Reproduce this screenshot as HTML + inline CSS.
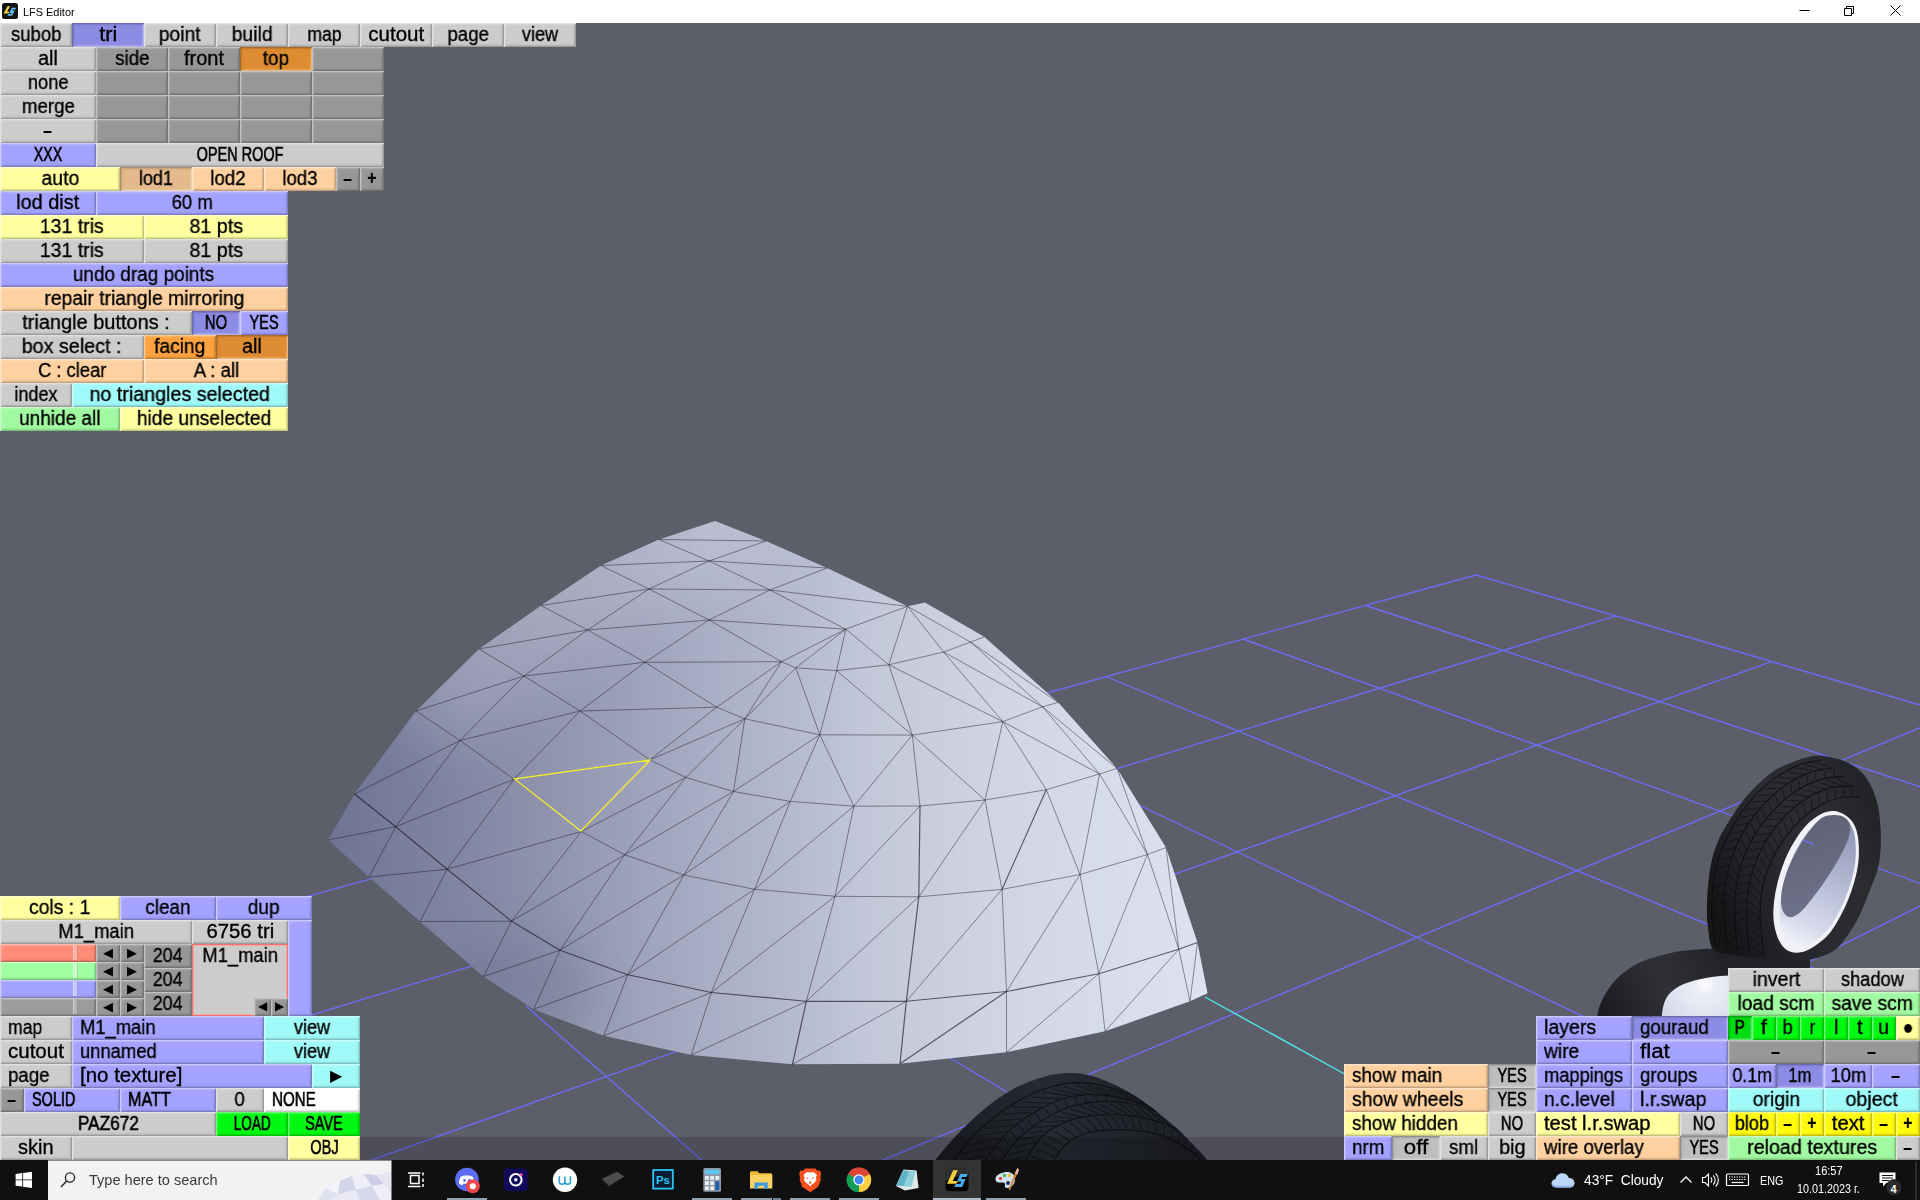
<!DOCTYPE html>
<html><head><meta charset="utf-8"><title>LFS Editor</title>
<style>
html,body{margin:0;padding:0;background:#5c5e6a;}
body{width:1920px;height:1200px;overflow:hidden;font-family:"Liberation Sans",sans-serif;}
#root{position:relative;width:1920px;height:1200px;overflow:hidden;background:#5c5e6a;}
#titlebar{position:absolute;left:0;top:0;width:1920px;height:23px;background:#fff;}
#ticon{position:absolute;left:2px;top:3px;width:16px;height:16px;}
#ttext{position:absolute;left:23px;top:5px;font-size:11.5px;line-height:15px;color:#000;transform:scaleX(0.95);transform-origin:0 50%;}
#wctl{position:absolute;left:1780px;top:0;}
#scene{position:absolute;left:0;top:23px;}
.b{position:absolute;box-sizing:border-box;text-align:center;font-size:20px;line-height:24px;color:#000;white-space:nowrap;overflow:hidden;}
.t{will-change:transform;display:inline-block;transform:scaleX(0.88);-webkit-text-stroke:0.35px #000;position:relative;top:-1px;}
.ar{font-size:13px;line-height:17px;}
.ar .t,.ar2 .t{transform:none;-webkit-text-stroke:0;top:0;}
.ar2{font-size:12px;line-height:17px;}
.pg{font-size:16px;line-height:23px;}
.pg .t{transform:none;-webkit-text-stroke:0;top:0;}
.mbox{line-height:22px;border:1px solid #ff6b6b;box-shadow:inset 0 0 0 1px rgba(255,120,120,.35) !important;}
#taskbar{position:absolute;left:0;top:1160px;width:1920px;height:40px;background:#101010;}
.tb{position:absolute;white-space:nowrap;line-height:18px;transform-origin:0 50%;}

</style></head><body>
<div id="root">
<div id="titlebar"><div id="ticon"><svg width="16" height="16" viewBox="0 0 16 16"><rect x="0" y="0" width="16" height="16" rx="2.500" fill="#131313"/><path d="M5.500 3.200h2.600l-3 5.600h2.400l-.9 1.700h-5z" fill="#f0d24a"/><path d="M9.800 4.800h4.400l-.9 1.700h-2.500l-.5 1.100h2.500l-2.700 5.200h-4.600l.9-1.700h2.700l.6-1.200h-2.500z" fill="#5db6ee"/></svg></div><span id="ttext">LFS Editor</span>
<svg id="wctl" width="140" height="23" viewBox="0 0 140 23"><path d="M19.5 10.5h10M64.5 8.5h7v7h-7zM66.5 8.5v-2h7v7h-2M110.500 5.5l10 10M120.5 5.5l-10 10" fill="none" stroke="#000" stroke-width="1"/></svg>
</div>
<svg id="scene" width="1920" height="1137" viewBox="0 23 1920 1137">
<defs>
<linearGradient id="dg" gradientUnits="userSpaceOnUse" x1="330" y1="0" x2="1208" y2="0"><stop offset="0.000" stop-color="#707494"/><stop offset="0.084" stop-color="#7a7e9c"/><stop offset="0.137" stop-color="#8084a1"/><stop offset="0.308" stop-color="#989cb5"/><stop offset="0.431" stop-color="#a9aec4"/><stop offset="0.513" stop-color="#b4b8cd"/><stop offset="0.633" stop-color="#c5cadb"/><stop offset="0.763" stop-color="#d0d4e4"/><stop offset="0.877" stop-color="#d7dcea"/><stop offset="1.000" stop-color="#dee2f0"/></linearGradient>
<radialGradient id="dtop" gradientUnits="userSpaceOnUse" cx="700" cy="540" r="200"><stop offset="0" stop-color="#c6c9df" stop-opacity="0.6"/><stop offset="1" stop-color="#c6c9df" stop-opacity="0"/></radialGradient>
<radialGradient id="ddark" gradientUnits="userSpaceOnUse" cx="0" cy="0" r="1" gradientTransform="translate(500 975) rotate(40) scale(290 150)"><stop offset="0" stop-color="#707695" stop-opacity="0.6"/><stop offset="0.5" stop-color="#727897" stop-opacity="0.34"/><stop offset="1" stop-color="#747a99" stop-opacity="0"/></radialGradient>
<linearGradient id="ty1" gradientUnits="userSpaceOnUse" x1="1710" y1="900" x2="1880" y2="830"><stop offset="0" stop-color="#151518"/><stop offset="0.25" stop-color="#222327"/><stop offset="0.5" stop-color="#2a2b30"/><stop offset="0.8" stop-color="#2b2c30"/><stop offset="1" stop-color="#232427"/></linearGradient>
<linearGradient id="ty3" gradientUnits="userSpaceOnUse" x1="960" y1="1160" x2="1180" y2="1080"><stop offset="0" stop-color="#1a1c22"/><stop offset="0.45" stop-color="#272a33"/><stop offset="1" stop-color="#1c1e24"/></linearGradient>
<linearGradient id="ty2" gradientUnits="userSpaceOnUse" x1="1600" y1="1000" x2="1720" y2="950"><stop offset="0" stop-color="#1c1d21"/><stop offset="0.5" stop-color="#2f3136"/><stop offset="1" stop-color="#222327"/></linearGradient>
<linearGradient id="rim1" gradientUnits="userSpaceOnUse" x1="1850" y1="820" x2="1790" y2="945"><stop offset="0" stop-color="#8d93b3"/><stop offset="0.45" stop-color="#b4b9d3"/><stop offset="0.8" stop-color="#d6d9eb"/><stop offset="1" stop-color="#f2f3fa"/></linearGradient>
<linearGradient id="hole1" gradientUnits="userSpaceOnUse" x1="1800" y1="820" x2="1830" y2="900"><stop offset="0" stop-color="#5f6273"/><stop offset="1" stop-color="#6d7188"/></linearGradient>
<radialGradient id="rim2g" gradientUnits="userSpaceOnUse" cx="1705" cy="985" r="70"><stop offset="0" stop-color="#ffffff"/><stop offset="0.15" stop-color="#eceef7"/><stop offset="1" stop-color="#c9cce0"/></radialGradient>
<clipPath id="sc"><rect x="0" y="23" width="1920" height="1137"/></clipPath>
</defs>
<rect x="0" y="23" width="1920" height="1137" fill="#5c5e6a"/>
<g clip-path="url(#sc)">
<line x1="300" y1="898.4" x2="1476" y2="575.0" stroke="#6d6df6" stroke-width="1.35" opacity="1"/>
<line x1="0" y1="1110.4" x2="1615" y2="616.2" stroke="#6d6df6" stroke-width="1.35" opacity="1"/>
<line x1="340" y1="1171.3" x2="1771" y2="661.9" stroke="#6d6df6" stroke-width="1.35" opacity="1"/>
<line x1="860" y1="1169.7" x2="1930" y2="723.5" stroke="#6d6df6" stroke-width="1.35" opacity="1"/>
<line x1="1380" y1="1176.0" x2="1930" y2="901.0" stroke="#6d6df6" stroke-width="1.35" opacity="1"/>
<line x1="1476" y1="575" x2="1930" y2="708" stroke="#6d6df6" stroke-width="1.35" opacity="1"/>
<line x1="1367" y1="606" x2="1930" y2="790" stroke="#6d6df6" stroke-width="1.35" opacity="1"/>
<line x1="1243" y1="639" x2="1930" y2="887" stroke="#6d6df6" stroke-width="1.35" opacity="1"/>
<line x1="1107" y1="677" x2="1930" y2="1016" stroke="#6d6df6" stroke-width="1.35" opacity="1"/>
<line x1="1040" y1="758" x2="1700" y2="1072" stroke="#6d6df6" stroke-width="1.35" opacity="1"/>
<line x1="950" y1="1058" x2="1130" y2="1165" stroke="#6d6df6" stroke-width="1.35" opacity="1"/>
<line x1="526" y1="1006" x2="705" y2="1163" stroke="#6d6df6" stroke-width="1.35" opacity="1"/>
<line x1="1205" y1="997" x2="1350" y2="1077" stroke="#50e8e8" stroke-width="1.4" opacity="1"/>
<polygon points="715,521 659,539.5 601,565.5 541,605.5 479,649 416,711 354.5,794 328.2,840 369,877 420,921.5 483.4,976.6 533.6,1009.3 603.7,1035.8 691.3,1055 792.5,1064.3 900,1063.8 1006.5,1052.3 1105,1031.3 1190,1001.3 1207.5,993.3 1197.5,942.5 1166,847.5 1117,768.4 1058.2,702.4 984.2,636.8 925,602.5 907.5,606.3 827,568 766,541" fill="url(#dg)"/>
<clipPath id="dclip"><polygon points="715,521 659,539.5 601,565.5 541,605.5 479,649 416,711 354.5,794 328.2,840 369,877 420,921.5 483.4,976.6 533.6,1009.3 603.7,1035.8 691.3,1055 792.5,1064.3 900,1063.8 1006.5,1052.3 1105,1031.3 1190,1001.3 1207.5,993.3 1197.5,942.5 1166,847.5 1117,768.4 1058.2,702.4 984.2,636.8 925,602.5 907.5,606.3 827,568 766,541"/></clipPath>
<g clip-path="url(#dclip)"><polyline points="760,500 715,521 659,539.5 601,565.5 541,605.5 479,649 416,711" fill="none" stroke="#fff" stroke-width="120" stroke-linejoin="round" opacity="0.2" style="filter:blur(32px)"/><ellipse cx="518" cy="985" rx="75" ry="50" fill="#4a5070" opacity="0.2" style="filter:blur(22px)"/></g>
<line x1="659" y1="539.5" x2="709" y2="561" stroke="#14141e" stroke-width="0.7" opacity="0.64"/>
<line x1="709" y1="561" x2="770" y2="590" stroke="#14141e" stroke-width="0.7" opacity="0.64"/>
<line x1="770" y1="590" x2="845.8" y2="629.2" stroke="#14141e" stroke-width="0.7" opacity="0.64"/>
<line x1="601" y1="565.5" x2="649" y2="589" stroke="#14141e" stroke-width="0.7" opacity="0.64"/>
<line x1="649" y1="589" x2="709" y2="620" stroke="#14141e" stroke-width="0.7" opacity="0.64"/>
<line x1="709" y1="620" x2="781.5" y2="661.7" stroke="#14141e" stroke-width="0.7" opacity="0.64"/>
<line x1="541" y1="605.5" x2="587.5" y2="630" stroke="#14141e" stroke-width="0.7" opacity="0.64"/>
<line x1="587.5" y1="630" x2="645" y2="662.3" stroke="#14141e" stroke-width="0.7" opacity="0.64"/>
<line x1="645" y1="662.3" x2="716.7" y2="707.2" stroke="#14141e" stroke-width="0.7" opacity="0.64"/>
<line x1="479" y1="649" x2="524" y2="676" stroke="#14141e" stroke-width="0.7" opacity="0.64"/>
<line x1="524" y1="676" x2="580" y2="711" stroke="#14141e" stroke-width="0.7" opacity="0.64"/>
<line x1="580" y1="711" x2="649.8" y2="759.9" stroke="#14141e" stroke-width="0.7" opacity="0.64"/>
<line x1="649.8" y1="759.9" x2="685.8" y2="777.5" stroke="#14141e" stroke-width="0.7" opacity="0.64"/>
<line x1="685.8" y1="777.5" x2="733.5" y2="791.5" stroke="#14141e" stroke-width="0.7" opacity="0.64"/>
<line x1="733.5" y1="791.5" x2="790.3" y2="801.4" stroke="#14141e" stroke-width="0.7" opacity="0.64"/>
<line x1="790.3" y1="801.4" x2="853.8" y2="806.2" stroke="#14141e" stroke-width="0.7" opacity="0.64"/>
<line x1="853.8" y1="806.2" x2="920" y2="806" stroke="#14141e" stroke-width="0.7" opacity="0.64"/>
<line x1="920" y1="806" x2="985" y2="800" stroke="#14141e" stroke-width="0.7" opacity="0.64"/>
<line x1="985" y1="800" x2="1046.3" y2="789.7" stroke="#14141e" stroke-width="0.7" opacity="0.64"/>
<line x1="1046.3" y1="789.7" x2="1099.6" y2="774" stroke="#14141e" stroke-width="0.7" opacity="0.64"/>
<line x1="1099.6" y1="774" x2="1117" y2="768.4" stroke="#14141e" stroke-width="0.7" opacity="0.64"/>
<line x1="416" y1="711" x2="460" y2="740.5" stroke="#14141e" stroke-width="0.7" opacity="0.64"/>
<line x1="460" y1="740.5" x2="514" y2="779.2" stroke="#14141e" stroke-width="0.7" opacity="0.64"/>
<line x1="514" y1="779.2" x2="581.3" y2="831.5" stroke="#14141e" stroke-width="0.7" opacity="0.64"/>
<line x1="581.3" y1="831.5" x2="624.8" y2="854.8" stroke="#14141e" stroke-width="0.7" opacity="0.64"/>
<line x1="624.8" y1="854.8" x2="683.8" y2="875" stroke="#14141e" stroke-width="0.7" opacity="0.64"/>
<line x1="683.8" y1="875" x2="754.5" y2="889.3" stroke="#14141e" stroke-width="0.7" opacity="0.64"/>
<line x1="754.5" y1="889.3" x2="835" y2="896.3" stroke="#14141e" stroke-width="0.7" opacity="0.64"/>
<line x1="835" y1="896.3" x2="918.8" y2="896.8" stroke="#14141e" stroke-width="0.7" opacity="0.64"/>
<line x1="918.8" y1="896.8" x2="1002" y2="889.4" stroke="#14141e" stroke-width="0.7" opacity="0.64"/>
<line x1="1002" y1="889.4" x2="1080" y2="874.5" stroke="#14141e" stroke-width="0.7" opacity="0.64"/>
<line x1="1080" y1="874.5" x2="1147.5" y2="854.5" stroke="#14141e" stroke-width="0.7" opacity="0.64"/>
<line x1="1147.5" y1="854.5" x2="1166" y2="847.5" stroke="#14141e" stroke-width="0.7" opacity="0.64"/>
<line x1="354.5" y1="794" x2="395.8" y2="826.7" stroke="#14141e" stroke-width="1.15" opacity="0.64"/>
<line x1="395.8" y1="826.7" x2="447.2" y2="869.2" stroke="#14141e" stroke-width="1.15" opacity="0.64"/>
<line x1="447.2" y1="869.2" x2="511.5" y2="921.2" stroke="#14141e" stroke-width="1.15" opacity="0.64"/>
<line x1="511.5" y1="921.2" x2="560" y2="950.2" stroke="#14141e" stroke-width="1.15" opacity="0.64"/>
<line x1="560" y1="950.2" x2="627.8" y2="974.8" stroke="#14141e" stroke-width="1.15" opacity="0.64"/>
<line x1="627.8" y1="974.8" x2="711.3" y2="992.5" stroke="#14141e" stroke-width="1.15" opacity="0.64"/>
<line x1="711.3" y1="992.5" x2="806.3" y2="1001.3" stroke="#14141e" stroke-width="1.15" opacity="0.64"/>
<line x1="806.3" y1="1001.3" x2="906.3" y2="1001.3" stroke="#14141e" stroke-width="1.15" opacity="0.64"/>
<line x1="906.3" y1="1001.3" x2="1006.5" y2="991.5" stroke="#14141e" stroke-width="1.15" opacity="0.64"/>
<line x1="1006.5" y1="991.5" x2="1098.8" y2="973.8" stroke="#14141e" stroke-width="1.15" opacity="0.64"/>
<line x1="1098.8" y1="973.8" x2="1178.8" y2="949.3" stroke="#14141e" stroke-width="1.15" opacity="0.64"/>
<line x1="1178.8" y1="949.3" x2="1197.5" y2="942.5" stroke="#14141e" stroke-width="1.15" opacity="0.64"/>
<line x1="659" y1="539.5" x2="766" y2="541" stroke="#14141e" stroke-width="0.7" opacity="0.64"/>
<line x1="766" y1="541" x2="709" y2="561" stroke="#14141e" stroke-width="0.7" opacity="0.64"/>
<line x1="709" y1="561" x2="827" y2="568" stroke="#14141e" stroke-width="0.7" opacity="0.64"/>
<line x1="827" y1="568" x2="770" y2="590" stroke="#14141e" stroke-width="0.7" opacity="0.64"/>
<line x1="770" y1="590" x2="907.5" y2="606.3" stroke="#14141e" stroke-width="0.7" opacity="0.64"/>
<line x1="907.5" y1="606.3" x2="845.8" y2="629.2" stroke="#14141e" stroke-width="0.7" opacity="0.64"/>
<line x1="601" y1="565.5" x2="709" y2="561" stroke="#14141e" stroke-width="0.7" opacity="0.64"/>
<line x1="709" y1="561" x2="649" y2="589" stroke="#14141e" stroke-width="0.7" opacity="0.64"/>
<line x1="649" y1="589" x2="770" y2="590" stroke="#14141e" stroke-width="0.7" opacity="0.64"/>
<line x1="770" y1="590" x2="709" y2="620" stroke="#14141e" stroke-width="0.7" opacity="0.64"/>
<line x1="709" y1="620" x2="845.8" y2="629.2" stroke="#14141e" stroke-width="0.7" opacity="0.64"/>
<line x1="845.8" y1="629.2" x2="781.5" y2="661.7" stroke="#14141e" stroke-width="0.7" opacity="0.64"/>
<line x1="541" y1="605.5" x2="649" y2="589" stroke="#14141e" stroke-width="0.7" opacity="0.64"/>
<line x1="649" y1="589" x2="587.5" y2="630" stroke="#14141e" stroke-width="0.7" opacity="0.64"/>
<line x1="587.5" y1="630" x2="709" y2="620" stroke="#14141e" stroke-width="0.7" opacity="0.64"/>
<line x1="709" y1="620" x2="645" y2="662.3" stroke="#14141e" stroke-width="0.7" opacity="0.64"/>
<line x1="645" y1="662.3" x2="781.5" y2="661.7" stroke="#14141e" stroke-width="0.7" opacity="0.64"/>
<line x1="781.5" y1="661.7" x2="716.7" y2="707.2" stroke="#14141e" stroke-width="0.7" opacity="0.64"/>
<line x1="479" y1="649" x2="587.5" y2="630" stroke="#14141e" stroke-width="0.7" opacity="0.64"/>
<line x1="587.5" y1="630" x2="524" y2="676" stroke="#14141e" stroke-width="0.7" opacity="0.64"/>
<line x1="524" y1="676" x2="645" y2="662.3" stroke="#14141e" stroke-width="0.7" opacity="0.64"/>
<line x1="645" y1="662.3" x2="580" y2="711" stroke="#14141e" stroke-width="0.7" opacity="0.64"/>
<line x1="580" y1="711" x2="716.7" y2="707.2" stroke="#14141e" stroke-width="0.7" opacity="0.64"/>
<line x1="716.7" y1="707.2" x2="649.8" y2="759.9" stroke="#14141e" stroke-width="0.7" opacity="0.64"/>
<line x1="416" y1="711" x2="524" y2="676" stroke="#14141e" stroke-width="0.7" opacity="0.64"/>
<line x1="524" y1="676" x2="460" y2="740.5" stroke="#14141e" stroke-width="0.7" opacity="0.64"/>
<line x1="460" y1="740.5" x2="580" y2="711" stroke="#14141e" stroke-width="0.7" opacity="0.64"/>
<line x1="580" y1="711" x2="514" y2="779.2" stroke="#14141e" stroke-width="0.7" opacity="0.64"/>
<line x1="514" y1="779.2" x2="649.8" y2="759.9" stroke="#14141e" stroke-width="0.7" opacity="0.64"/>
<line x1="649.8" y1="759.9" x2="581.3" y2="831.5" stroke="#14141e" stroke-width="0.7" opacity="0.64"/>
<line x1="581.3" y1="831.5" x2="685.8" y2="777.5" stroke="#14141e" stroke-width="0.7" opacity="0.64"/>
<line x1="685.8" y1="777.5" x2="624.8" y2="854.8" stroke="#14141e" stroke-width="0.7" opacity="0.64"/>
<line x1="624.8" y1="854.8" x2="733.5" y2="791.5" stroke="#14141e" stroke-width="0.7" opacity="0.64"/>
<line x1="733.5" y1="791.5" x2="683.8" y2="875" stroke="#14141e" stroke-width="0.7" opacity="0.64"/>
<line x1="683.8" y1="875" x2="790.3" y2="801.4" stroke="#14141e" stroke-width="0.7" opacity="0.64"/>
<line x1="790.3" y1="801.4" x2="754.5" y2="889.3" stroke="#14141e" stroke-width="0.7" opacity="0.64"/>
<line x1="754.5" y1="889.3" x2="853.8" y2="806.2" stroke="#14141e" stroke-width="0.7" opacity="0.64"/>
<line x1="853.8" y1="806.2" x2="835" y2="896.3" stroke="#14141e" stroke-width="0.7" opacity="0.64"/>
<line x1="835" y1="896.3" x2="920" y2="806" stroke="#14141e" stroke-width="0.7" opacity="0.64"/>
<line x1="920" y1="806" x2="918.8" y2="896.8" stroke="#14141e" stroke-width="1.2" opacity="0.64"/>
<line x1="918.8" y1="896.8" x2="985" y2="800" stroke="#14141e" stroke-width="0.7" opacity="0.64"/>
<line x1="985" y1="800" x2="1002" y2="889.4" stroke="#14141e" stroke-width="0.7" opacity="0.64"/>
<line x1="1002" y1="889.4" x2="1046.3" y2="789.7" stroke="#14141e" stroke-width="1.2" opacity="0.64"/>
<line x1="1046.3" y1="789.7" x2="1080" y2="874.5" stroke="#14141e" stroke-width="0.7" opacity="0.64"/>
<line x1="1080" y1="874.5" x2="1099.6" y2="774" stroke="#14141e" stroke-width="0.7" opacity="0.64"/>
<line x1="1099.6" y1="774" x2="1147.5" y2="854.5" stroke="#14141e" stroke-width="0.7" opacity="0.64"/>
<line x1="1147.5" y1="854.5" x2="1117" y2="768.4" stroke="#14141e" stroke-width="0.7" opacity="0.64"/>
<line x1="354.5" y1="794" x2="460" y2="740.5" stroke="#14141e" stroke-width="0.7" opacity="0.64"/>
<line x1="460" y1="740.5" x2="395.8" y2="826.7" stroke="#14141e" stroke-width="0.7" opacity="0.64"/>
<line x1="395.8" y1="826.7" x2="514" y2="779.2" stroke="#14141e" stroke-width="0.7" opacity="0.64"/>
<line x1="514" y1="779.2" x2="447.2" y2="869.2" stroke="#14141e" stroke-width="0.7" opacity="0.64"/>
<line x1="447.2" y1="869.2" x2="581.3" y2="831.5" stroke="#14141e" stroke-width="0.7" opacity="0.64"/>
<line x1="581.3" y1="831.5" x2="511.5" y2="921.2" stroke="#14141e" stroke-width="0.7" opacity="0.64"/>
<line x1="511.5" y1="921.2" x2="624.8" y2="854.8" stroke="#14141e" stroke-width="0.7" opacity="0.64"/>
<line x1="624.8" y1="854.8" x2="560" y2="950.2" stroke="#14141e" stroke-width="0.7" opacity="0.64"/>
<line x1="560" y1="950.2" x2="683.8" y2="875" stroke="#14141e" stroke-width="0.7" opacity="0.64"/>
<line x1="683.8" y1="875" x2="627.8" y2="974.8" stroke="#14141e" stroke-width="0.7" opacity="0.64"/>
<line x1="627.8" y1="974.8" x2="754.5" y2="889.3" stroke="#14141e" stroke-width="0.7" opacity="0.64"/>
<line x1="754.5" y1="889.3" x2="711.3" y2="992.5" stroke="#14141e" stroke-width="0.7" opacity="0.64"/>
<line x1="711.3" y1="992.5" x2="835" y2="896.3" stroke="#14141e" stroke-width="0.7" opacity="0.64"/>
<line x1="835" y1="896.3" x2="806.3" y2="1001.3" stroke="#14141e" stroke-width="0.7" opacity="0.64"/>
<line x1="806.3" y1="1001.3" x2="918.8" y2="896.8" stroke="#14141e" stroke-width="0.7" opacity="0.64"/>
<line x1="918.8" y1="896.8" x2="906.3" y2="1001.3" stroke="#14141e" stroke-width="1.2" opacity="0.64"/>
<line x1="906.3" y1="1001.3" x2="1002" y2="889.4" stroke="#14141e" stroke-width="0.7" opacity="0.64"/>
<line x1="1002" y1="889.4" x2="1006.5" y2="991.5" stroke="#14141e" stroke-width="0.7" opacity="0.64"/>
<line x1="1006.5" y1="991.5" x2="1080" y2="874.5" stroke="#14141e" stroke-width="0.7" opacity="0.64"/>
<line x1="1080" y1="874.5" x2="1098.8" y2="973.8" stroke="#14141e" stroke-width="0.7" opacity="0.64"/>
<line x1="1098.8" y1="973.8" x2="1147.5" y2="854.5" stroke="#14141e" stroke-width="0.7" opacity="0.64"/>
<line x1="1147.5" y1="854.5" x2="1178.8" y2="949.3" stroke="#14141e" stroke-width="0.7" opacity="0.64"/>
<line x1="1178.8" y1="949.3" x2="1166" y2="847.5" stroke="#14141e" stroke-width="0.7" opacity="0.64"/>
<line x1="328.2" y1="840" x2="395.8" y2="826.7" stroke="#14141e" stroke-width="0.7" opacity="0.64"/>
<line x1="395.8" y1="826.7" x2="369" y2="877" stroke="#14141e" stroke-width="0.7" opacity="0.64"/>
<line x1="369" y1="877" x2="447.2" y2="869.2" stroke="#14141e" stroke-width="0.7" opacity="0.64"/>
<line x1="447.2" y1="869.2" x2="420" y2="921.5" stroke="#14141e" stroke-width="0.7" opacity="0.64"/>
<line x1="420" y1="921.5" x2="511.5" y2="921.2" stroke="#14141e" stroke-width="0.7" opacity="0.64"/>
<line x1="511.5" y1="921.2" x2="483.4" y2="976.6" stroke="#14141e" stroke-width="0.7" opacity="0.64"/>
<line x1="483.4" y1="976.6" x2="560" y2="950.2" stroke="#14141e" stroke-width="0.7" opacity="0.64"/>
<line x1="560" y1="950.2" x2="533.6" y2="1009.3" stroke="#14141e" stroke-width="0.7" opacity="0.64"/>
<line x1="533.6" y1="1009.3" x2="627.8" y2="974.8" stroke="#14141e" stroke-width="0.7" opacity="0.64"/>
<line x1="627.8" y1="974.8" x2="603.7" y2="1035.8" stroke="#14141e" stroke-width="0.7" opacity="0.64"/>
<line x1="603.7" y1="1035.8" x2="711.3" y2="992.5" stroke="#14141e" stroke-width="0.7" opacity="0.64"/>
<line x1="711.3" y1="992.5" x2="691.3" y2="1055" stroke="#14141e" stroke-width="0.7" opacity="0.64"/>
<line x1="691.3" y1="1055" x2="806.3" y2="1001.3" stroke="#14141e" stroke-width="0.7" opacity="0.64"/>
<line x1="806.3" y1="1001.3" x2="792.5" y2="1064.3" stroke="#14141e" stroke-width="1.2" opacity="0.64"/>
<line x1="792.5" y1="1064.3" x2="906.3" y2="1001.3" stroke="#14141e" stroke-width="0.7" opacity="0.64"/>
<line x1="906.3" y1="1001.3" x2="900" y2="1063.8" stroke="#14141e" stroke-width="1.2" opacity="0.64"/>
<line x1="900" y1="1063.8" x2="1006.5" y2="991.5" stroke="#14141e" stroke-width="1.2" opacity="0.64"/>
<line x1="1006.5" y1="991.5" x2="1006.5" y2="1052.3" stroke="#14141e" stroke-width="0.7" opacity="0.64"/>
<line x1="1006.5" y1="1052.3" x2="1098.8" y2="973.8" stroke="#14141e" stroke-width="0.7" opacity="0.64"/>
<line x1="1098.8" y1="973.8" x2="1105" y2="1031.3" stroke="#14141e" stroke-width="0.7" opacity="0.64"/>
<line x1="1105" y1="1031.3" x2="1178.8" y2="949.3" stroke="#14141e" stroke-width="0.7" opacity="0.64"/>
<line x1="1178.8" y1="949.3" x2="1190" y2="1001.3" stroke="#14141e" stroke-width="0.7" opacity="0.64"/>
<line x1="1190" y1="1001.3" x2="1197.5" y2="942.5" stroke="#14141e" stroke-width="0.7" opacity="0.64"/>
<line x1="907.5" y1="606.3" x2="888.8" y2="664.8" stroke="#14141e" stroke-width="0.7" opacity="0.64"/>
<line x1="907.5" y1="606.3" x2="943.6" y2="652" stroke="#14141e" stroke-width="0.7" opacity="0.64"/>
<line x1="907.5" y1="606.3" x2="970.6" y2="642.1" stroke="#14141e" stroke-width="0.7" opacity="0.64"/>
<line x1="845.8" y1="629.2" x2="795.8" y2="667.8" stroke="#14141e" stroke-width="0.7" opacity="0.64"/>
<line x1="845.8" y1="629.2" x2="836.6" y2="670.6" stroke="#14141e" stroke-width="0.7" opacity="0.64"/>
<line x1="845.8" y1="629.2" x2="888.8" y2="664.8" stroke="#14141e" stroke-width="0.7" opacity="0.64"/>
<line x1="781.5" y1="661.7" x2="795.8" y2="667.8" stroke="#14141e" stroke-width="0.7" opacity="0.64"/>
<line x1="795.8" y1="667.8" x2="836.6" y2="670.6" stroke="#14141e" stroke-width="0.7" opacity="0.64"/>
<line x1="836.6" y1="670.6" x2="888.8" y2="664.8" stroke="#14141e" stroke-width="0.7" opacity="0.64"/>
<line x1="888.8" y1="664.8" x2="943.6" y2="652" stroke="#14141e" stroke-width="0.7" opacity="0.64"/>
<line x1="943.6" y1="652" x2="970.6" y2="642.1" stroke="#14141e" stroke-width="0.7" opacity="0.64"/>
<line x1="970.6" y1="642.1" x2="984.2" y2="636.8" stroke="#14141e" stroke-width="0.7" opacity="0.64"/>
<line x1="716.7" y1="707.2" x2="744.8" y2="718.8" stroke="#14141e" stroke-width="0.7" opacity="0.64"/>
<line x1="744.8" y1="718.8" x2="819.8" y2="734.8" stroke="#14141e" stroke-width="0.7" opacity="0.64"/>
<line x1="819.8" y1="734.8" x2="912.3" y2="735.1" stroke="#14141e" stroke-width="0.7" opacity="0.64"/>
<line x1="912.3" y1="735.1" x2="1002.8" y2="721.6" stroke="#14141e" stroke-width="0.7" opacity="0.64"/>
<line x1="1002.8" y1="721.6" x2="1042.5" y2="706.8" stroke="#14141e" stroke-width="0.7" opacity="0.64"/>
<line x1="1042.5" y1="706.8" x2="1058.2" y2="702.4" stroke="#14141e" stroke-width="0.7" opacity="0.64"/>
<line x1="781.5" y1="661.7" x2="744.8" y2="718.8" stroke="#14141e" stroke-width="0.7" opacity="0.64"/>
<line x1="795.8" y1="667.8" x2="744.8" y2="718.8" stroke="#14141e" stroke-width="0.7" opacity="0.64"/>
<line x1="795.8" y1="667.8" x2="819.8" y2="734.8" stroke="#14141e" stroke-width="0.7" opacity="0.64"/>
<line x1="836.6" y1="670.6" x2="819.8" y2="734.8" stroke="#14141e" stroke-width="0.7" opacity="0.64"/>
<line x1="836.6" y1="670.6" x2="912.3" y2="735.1" stroke="#14141e" stroke-width="0.7" opacity="0.64"/>
<line x1="888.8" y1="664.8" x2="912.3" y2="735.1" stroke="#14141e" stroke-width="0.7" opacity="0.64"/>
<line x1="888.8" y1="664.8" x2="1002.8" y2="721.6" stroke="#14141e" stroke-width="0.7" opacity="0.64"/>
<line x1="943.6" y1="652" x2="1002.8" y2="721.6" stroke="#14141e" stroke-width="0.7" opacity="0.64"/>
<line x1="943.6" y1="652" x2="1042.5" y2="706.8" stroke="#14141e" stroke-width="0.7" opacity="0.64"/>
<line x1="970.6" y1="642.1" x2="1042.5" y2="706.8" stroke="#14141e" stroke-width="0.7" opacity="0.64"/>
<line x1="970.6" y1="642.1" x2="1058.2" y2="702.4" stroke="#14141e" stroke-width="0.7" opacity="0.64"/>
<line x1="744.8" y1="718.8" x2="649.8" y2="759.9" stroke="#14141e" stroke-width="0.7" opacity="0.64"/>
<line x1="744.8" y1="718.8" x2="685.8" y2="777.5" stroke="#14141e" stroke-width="0.7" opacity="0.64"/>
<line x1="744.8" y1="718.8" x2="733.5" y2="791.5" stroke="#14141e" stroke-width="0.7" opacity="0.64"/>
<line x1="819.8" y1="734.8" x2="733.5" y2="791.5" stroke="#14141e" stroke-width="0.7" opacity="0.64"/>
<line x1="819.8" y1="734.8" x2="790.3" y2="801.4" stroke="#14141e" stroke-width="0.7" opacity="0.64"/>
<line x1="819.8" y1="734.8" x2="853.8" y2="806.2" stroke="#14141e" stroke-width="0.7" opacity="0.64"/>
<line x1="912.3" y1="735.1" x2="853.8" y2="806.2" stroke="#14141e" stroke-width="0.7" opacity="0.64"/>
<line x1="912.3" y1="735.1" x2="920" y2="806" stroke="#14141e" stroke-width="0.7" opacity="0.64"/>
<line x1="912.3" y1="735.1" x2="985" y2="800" stroke="#14141e" stroke-width="0.7" opacity="0.64"/>
<line x1="1002.8" y1="721.6" x2="985" y2="800" stroke="#14141e" stroke-width="0.7" opacity="0.64"/>
<line x1="1002.8" y1="721.6" x2="1046.3" y2="789.7" stroke="#14141e" stroke-width="0.7" opacity="0.64"/>
<line x1="1002.8" y1="721.6" x2="1099.6" y2="774" stroke="#14141e" stroke-width="0.7" opacity="0.64"/>
<line x1="1042.5" y1="706.8" x2="1099.6" y2="774" stroke="#14141e" stroke-width="0.7" opacity="0.64"/>
<line x1="1042.5" y1="706.8" x2="1117" y2="768.4" stroke="#14141e" stroke-width="0.7" opacity="0.64"/>
<polygon points="514.5,779 650,760 581,831" fill="none" stroke="#f2ee3c" stroke-width="1.4"/>
<clipPath id="c3"><path d="M926.6 1174.0 C928.1 1171.6 930.1 1166.6 935.4 1159.8 C940.7 1153.0 950.1 1141.8 958.4 1133.2 C966.7 1124.6 975.9 1115.8 985.0 1108.4 C994.1 1101.0 1003.8 1094.2 1013.3 1089.0 C1022.8 1083.8 1032.8 1080.1 1041.7 1077.4 C1050.6 1074.7 1058.2 1073.3 1066.5 1073.0 C1074.8 1072.7 1082.1 1073.2 1091.3 1075.7 C1100.5 1078.2 1112.0 1083.2 1121.4 1088.1 C1130.8 1093.0 1138.8 1098.3 1147.9 1104.9 C1157.1 1111.5 1168.0 1120.5 1176.3 1127.9 C1184.6 1135.3 1192.3 1143.9 1197.5 1149.2 C1202.7 1154.5 1204.0 1155.7 1207.2 1159.8 C1210.5 1163.9 1215.4 1171.6 1217.0 1174.0 Z"/></clipPath>
<path d="M926.6 1174.0 C928.1 1171.6 930.1 1166.6 935.4 1159.8 C940.7 1153.0 950.1 1141.8 958.4 1133.2 C966.7 1124.6 975.9 1115.8 985.0 1108.4 C994.1 1101.0 1003.8 1094.2 1013.3 1089.0 C1022.8 1083.8 1032.8 1080.1 1041.7 1077.4 C1050.6 1074.7 1058.2 1073.3 1066.5 1073.0 C1074.8 1072.7 1082.1 1073.2 1091.3 1075.7 C1100.5 1078.2 1112.0 1083.2 1121.4 1088.1 C1130.8 1093.0 1138.8 1098.3 1147.9 1104.9 C1157.1 1111.5 1168.0 1120.5 1176.3 1127.9 C1184.6 1135.3 1192.3 1143.9 1197.5 1149.2 C1202.7 1154.5 1204.0 1155.7 1207.2 1159.8 C1210.5 1163.9 1215.4 1171.6 1217.0 1174.0 Z" fill="url(#ty3)"/>
<g clip-path="url(#c3)"><path d="M951.4 1163.3 C955.2 1158.6 965.2 1144.2 974.4 1135.0 C983.5 1125.8 995.1 1115.9 1006.3 1108.4 C1017.5 1100.9 1029.9 1094.1 1041.7 1089.8 C1053.5 1085.5 1065.3 1083.1 1077.1 1082.8 C1088.9 1082.5 1100.7 1084.7 1112.5 1088.1 C1124.3 1091.5 1137.3 1097.0 1147.9 1103.1 C1158.5 1109.1 1171.6 1120.9 1176.3 1124.4" fill="none" stroke="#0e0f12" stroke-width="1.4" opacity="0.8"/>
<path d="M983.2 1163.3 C987.1 1158.3 997.1 1142.0 1006.3 1133.2 C1015.4 1124.4 1027.5 1116.2 1038.1 1110.2 C1048.7 1104.2 1059.1 1099.4 1070.0 1096.9 C1080.9 1094.4 1092.1 1094.2 1103.6 1095.2 C1115.1 1096.2 1128.8 1099.7 1139.1 1103.1 C1149.4 1106.5 1157.0 1110.2 1165.6 1115.5 C1174.1 1120.8 1186.3 1131.8 1190.4 1135.0" fill="none" stroke="#0e0f12" stroke-width="1.4" opacity="0.8"/>
<path d="M999.2 1163.3 C1002.7 1158.9 1011.9 1144.8 1020.4 1136.8 C1029.0 1128.8 1041.0 1120.8 1050.5 1115.5 C1060.0 1110.2 1066.8 1107.2 1077.1 1104.9 C1087.4 1102.6 1100.7 1100.8 1112.5 1101.4 C1124.3 1102.0 1137.3 1105.2 1147.9 1108.4 C1158.5 1111.6 1168.0 1115.8 1176.3 1120.8 C1184.6 1125.8 1194.0 1135.5 1197.5 1138.5" fill="none" stroke="#0e0f12" stroke-width="1.4" opacity="0.8"/>
<path d="M1024.0 1163.3 C1027.0 1158.9 1034.3 1143.9 1041.7 1136.8 C1049.1 1129.7 1059.4 1124.3 1068.2 1120.8 C1077.0 1117.2 1084.5 1116.4 1094.8 1115.5 C1105.1 1114.6 1118.4 1114.0 1130.2 1115.5 C1142.0 1117.0 1156.1 1120.9 1165.6 1124.4 C1175.0 1128.0 1181.0 1132.7 1186.9 1136.8 C1192.8 1140.9 1198.7 1147.1 1201.0 1149.2" fill="none" stroke="#0e0f12" stroke-width="1.4" opacity="0.8"/>
<path d="M1052.3 1163.3 C1054.4 1160.3 1059.1 1150.6 1064.7 1145.6 C1070.3 1140.6 1077.9 1135.8 1085.9 1133.2 C1093.9 1130.6 1102.8 1130.0 1112.5 1129.7 C1122.2 1129.4 1135.0 1130.0 1144.4 1131.5 C1153.9 1133.0 1161.5 1135.3 1169.2 1138.5 C1176.9 1141.7 1185.1 1147.4 1190.4 1150.9 C1195.7 1154.5 1199.2 1158.3 1201.0 1159.8" fill="none" stroke="#0e0f12" stroke-width="1.4" opacity="0.8"/>
<line x1="955.2" y1="1162.5" x2="985.8" y2="1155.8" stroke="#0e0f12" stroke-width="1.12" opacity="0.64"/>
<line x1="962.4" y1="1153.6" x2="992.3" y2="1147.4" stroke="#0e0f12" stroke-width="1.12" opacity="0.64"/>
<line x1="969.5" y1="1144.8" x2="998.8" y2="1138.9" stroke="#0e0f12" stroke-width="1.12" opacity="0.64"/>
<line x1="976.8" y1="1136.0" x2="1006.1" y2="1131.3" stroke="#0e0f12" stroke-width="1.12" opacity="0.64"/>
<line x1="985.3" y1="1128.5" x2="1014.6" y2="1125.0" stroke="#0e0f12" stroke-width="1.12" opacity="0.64"/>
<line x1="994.1" y1="1121.3" x2="1023.2" y2="1118.7" stroke="#0e0f12" stroke-width="1.12" opacity="0.64"/>
<line x1="1002.9" y1="1114.1" x2="1031.8" y2="1112.4" stroke="#0e0f12" stroke-width="1.12" opacity="0.64"/>
<line x1="1012.0" y1="1107.3" x2="1041.1" y2="1107.4" stroke="#0e0f12" stroke-width="1.12" opacity="0.64"/>
<line x1="1022.1" y1="1102.1" x2="1050.9" y2="1103.2" stroke="#0e0f12" stroke-width="1.12" opacity="0.64"/>
<line x1="1032.2" y1="1096.9" x2="1060.6" y2="1099.1" stroke="#0e0f12" stroke-width="1.12" opacity="0.64"/>
<line x1="1042.3" y1="1091.9" x2="1070.7" y2="1096.1" stroke="#0e0f12" stroke-width="1.12" opacity="0.64"/>
<line x1="1053.2" y1="1089.0" x2="1081.3" y2="1095.4" stroke="#0e0f12" stroke-width="1.12" opacity="0.64"/>
<line x1="1064.4" y1="1087.0" x2="1091.9" y2="1094.7" stroke="#0e0f12" stroke-width="1.12" opacity="0.64"/>
<line x1="1075.6" y1="1085.0" x2="1102.4" y2="1094.5" stroke="#0e0f12" stroke-width="1.12" opacity="0.64"/>
<line x1="1086.8" y1="1085.2" x2="1112.8" y2="1096.6" stroke="#0e0f12" stroke-width="1.12" opacity="0.64"/>
<line x1="1098.0" y1="1086.9" x2="1123.2" y2="1098.8" stroke="#0e0f12" stroke-width="1.12" opacity="0.64"/>
<line x1="1109.3" y1="1088.7" x2="1133.6" y2="1101.0" stroke="#0e0f12" stroke-width="1.12" opacity="0.64"/>
<line x1="1120.1" y1="1091.7" x2="1143.5" y2="1104.9" stroke="#0e0f12" stroke-width="1.12" opacity="0.64"/>
<line x1="1130.6" y1="1096.2" x2="1153.1" y2="1109.3" stroke="#0e0f12" stroke-width="1.12" opacity="0.64"/>
<line x1="1141.1" y1="1100.7" x2="1162.8" y2="1113.8" stroke="#0e0f12" stroke-width="1.12" opacity="0.64"/>
<line x1="1151.3" y1="1105.6" x2="1171.3" y2="1120.1" stroke="#0e0f12" stroke-width="1.12" opacity="0.64"/>
<line x1="1160.4" y1="1112.4" x2="1179.7" y2="1126.7" stroke="#0e0f12" stroke-width="1.12" opacity="0.64"/>
<line x1="1169.5" y1="1119.3" x2="1188.1" y2="1133.3" stroke="#0e0f12" stroke-width="1.12" opacity="0.64"/>
<line x1="990.6" y1="1155.8" x2="998.2" y2="1162.5" stroke="#0e0f12" stroke-width="1.12" opacity="0.64"/>
<line x1="997.0" y1="1147.5" x2="1004.5" y2="1154.6" stroke="#0e0f12" stroke-width="1.12" opacity="0.64"/>
<line x1="1003.4" y1="1139.2" x2="1010.8" y2="1146.8" stroke="#0e0f12" stroke-width="1.12" opacity="0.64"/>
<line x1="1010.6" y1="1131.6" x2="1017.1" y2="1139.0" stroke="#0e0f12" stroke-width="1.12" opacity="0.64"/>
<line x1="1019.0" y1="1125.4" x2="1024.6" y2="1132.4" stroke="#0e0f12" stroke-width="1.12" opacity="0.64"/>
<line x1="1027.5" y1="1119.3" x2="1032.8" y2="1126.6" stroke="#0e0f12" stroke-width="1.12" opacity="0.64"/>
<line x1="1036.0" y1="1113.1" x2="1041.0" y2="1120.8" stroke="#0e0f12" stroke-width="1.12" opacity="0.64"/>
<line x1="1045.2" y1="1108.3" x2="1049.3" y2="1115.2" stroke="#0e0f12" stroke-width="1.12" opacity="0.64"/>
<line x1="1054.9" y1="1104.3" x2="1058.5" y2="1111.3" stroke="#0e0f12" stroke-width="1.12" opacity="0.64"/>
<line x1="1064.6" y1="1100.2" x2="1067.8" y2="1107.5" stroke="#0e0f12" stroke-width="1.12" opacity="0.64"/>
<line x1="1074.6" y1="1097.5" x2="1077.2" y2="1104.0" stroke="#0e0f12" stroke-width="1.12" opacity="0.64"/>
<line x1="1085.1" y1="1096.9" x2="1087.2" y2="1103.1" stroke="#0e0f12" stroke-width="1.12" opacity="0.64"/>
<line x1="1095.5" y1="1096.3" x2="1097.2" y2="1102.2" stroke="#0e0f12" stroke-width="1.12" opacity="0.64"/>
<line x1="1106.0" y1="1096.3" x2="1107.2" y2="1101.3" stroke="#0e0f12" stroke-width="1.12" opacity="0.64"/>
<line x1="1116.2" y1="1098.4" x2="1117.1" y2="1101.9" stroke="#0e0f12" stroke-width="1.12" opacity="0.64"/>
<line x1="1126.5" y1="1100.7" x2="1127.0" y2="1103.9" stroke="#0e0f12" stroke-width="1.12" opacity="0.64"/>
<line x1="1136.7" y1="1102.9" x2="1136.8" y2="1105.8" stroke="#0e0f12" stroke-width="1.12" opacity="0.64"/>
<line x1="1146.4" y1="1106.7" x2="1146.6" y2="1108.0" stroke="#0e0f12" stroke-width="1.12" opacity="0.64"/>
<line x1="1156.0" y1="1111.1" x2="1155.9" y2="1111.8" stroke="#0e0f12" stroke-width="1.12" opacity="0.64"/>
<line x1="1165.5" y1="1115.5" x2="1165.1" y2="1115.8" stroke="#0e0f12" stroke-width="1.12" opacity="0.64"/>
<line x1="1173.9" y1="1121.8" x2="1174.1" y2="1120.1" stroke="#0e0f12" stroke-width="1.12" opacity="0.64"/>
<line x1="1182.1" y1="1128.2" x2="1182.2" y2="1126.0" stroke="#0e0f12" stroke-width="1.12" opacity="0.64"/>
<line x1="1190.3" y1="1134.7" x2="1189.9" y2="1132.4" stroke="#0e0f12" stroke-width="1.12" opacity="0.64"/>
<line x1="1002.2" y1="1162.6" x2="1026.0" y2="1156.6" stroke="#0e0f12" stroke-width="1.12" opacity="0.64"/>
<line x1="1008.3" y1="1154.8" x2="1031.1" y2="1149.2" stroke="#0e0f12" stroke-width="1.12" opacity="0.64"/>
<line x1="1014.4" y1="1147.0" x2="1036.2" y2="1141.7" stroke="#0e0f12" stroke-width="1.12" opacity="0.64"/>
<line x1="1020.6" y1="1139.4" x2="1042.3" y2="1135.3" stroke="#0e0f12" stroke-width="1.12" opacity="0.64"/>
<line x1="1028.0" y1="1133.0" x2="1049.9" y2="1130.5" stroke="#0e0f12" stroke-width="1.12" opacity="0.64"/>
<line x1="1036.1" y1="1127.4" x2="1057.6" y2="1125.8" stroke="#0e0f12" stroke-width="1.12" opacity="0.64"/>
<line x1="1044.2" y1="1121.7" x2="1065.3" y2="1121.1" stroke="#0e0f12" stroke-width="1.12" opacity="0.64"/>
<line x1="1052.5" y1="1116.3" x2="1073.9" y2="1118.8" stroke="#0e0f12" stroke-width="1.12" opacity="0.64"/>
<line x1="1061.6" y1="1112.7" x2="1082.7" y2="1116.9" stroke="#0e0f12" stroke-width="1.12" opacity="0.64"/>
<line x1="1070.8" y1="1109.2" x2="1091.5" y2="1114.9" stroke="#0e0f12" stroke-width="1.12" opacity="0.64"/>
<line x1="1080.1" y1="1105.9" x2="1100.5" y2="1114.4" stroke="#0e0f12" stroke-width="1.12" opacity="0.64"/>
<line x1="1089.9" y1="1105.0" x2="1109.5" y2="1114.3" stroke="#0e0f12" stroke-width="1.12" opacity="0.64"/>
<line x1="1099.8" y1="1104.2" x2="1118.5" y2="1114.2" stroke="#0e0f12" stroke-width="1.12" opacity="0.64"/>
<line x1="1109.6" y1="1103.3" x2="1127.6" y2="1114.1" stroke="#0e0f12" stroke-width="1.12" opacity="0.64"/>
<line x1="1119.3" y1="1103.9" x2="1136.3" y2="1116.1" stroke="#0e0f12" stroke-width="1.12" opacity="0.64"/>
<line x1="1129.0" y1="1105.8" x2="1145.1" y2="1118.2" stroke="#0e0f12" stroke-width="1.12" opacity="0.64"/>
<line x1="1138.7" y1="1107.8" x2="1153.9" y2="1120.4" stroke="#0e0f12" stroke-width="1.12" opacity="0.64"/>
<line x1="1148.4" y1="1109.7" x2="1162.7" y2="1122.5" stroke="#0e0f12" stroke-width="1.12" opacity="0.64"/>
<line x1="1157.5" y1="1113.5" x2="1170.6" y2="1126.6" stroke="#0e0f12" stroke-width="1.12" opacity="0.64"/>
<line x1="1166.5" y1="1117.6" x2="1178.5" y2="1131.1" stroke="#0e0f12" stroke-width="1.12" opacity="0.64"/>
<line x1="1175.5" y1="1121.6" x2="1186.3" y2="1135.7" stroke="#0e0f12" stroke-width="1.12" opacity="0.64"/>
<line x1="1183.4" y1="1127.5" x2="1193.1" y2="1141.5" stroke="#0e0f12" stroke-width="1.12" opacity="0.64"/>
<line x1="1191.0" y1="1133.8" x2="1199.9" y2="1147.5" stroke="#0e0f12" stroke-width="1.12" opacity="0.64"/>
<line x1="1031.3" y1="1156.6" x2="1050.0" y2="1162.6" stroke="#0e0f12" stroke-width="1.12" opacity="0.64"/>
<line x1="1036.2" y1="1149.3" x2="1054.3" y2="1156.4" stroke="#0e0f12" stroke-width="1.12" opacity="0.64"/>
<line x1="1041.1" y1="1142.1" x2="1058.6" y2="1150.2" stroke="#0e0f12" stroke-width="1.12" opacity="0.64"/>
<line x1="1047.0" y1="1135.9" x2="1063.1" y2="1144.3" stroke="#0e0f12" stroke-width="1.12" opacity="0.64"/>
<line x1="1054.5" y1="1131.4" x2="1069.6" y2="1140.5" stroke="#0e0f12" stroke-width="1.12" opacity="0.64"/>
<line x1="1062.0" y1="1126.8" x2="1076.0" y2="1136.7" stroke="#0e0f12" stroke-width="1.12" opacity="0.64"/>
<line x1="1069.5" y1="1122.3" x2="1082.5" y2="1132.9" stroke="#0e0f12" stroke-width="1.12" opacity="0.64"/>
<line x1="1078.1" y1="1120.5" x2="1089.7" y2="1131.2" stroke="#0e0f12" stroke-width="1.12" opacity="0.64"/>
<line x1="1086.7" y1="1118.8" x2="1097.1" y2="1130.1" stroke="#0e0f12" stroke-width="1.12" opacity="0.64"/>
<line x1="1095.3" y1="1117.1" x2="1104.6" y2="1129.1" stroke="#0e0f12" stroke-width="1.12" opacity="0.64"/>
<line x1="1104.0" y1="1116.9" x2="1112.0" y2="1128.3" stroke="#0e0f12" stroke-width="1.12" opacity="0.64"/>
<line x1="1112.8" y1="1117.0" x2="1119.5" y2="1128.7" stroke="#0e0f12" stroke-width="1.12" opacity="0.64"/>
<line x1="1121.6" y1="1117.0" x2="1127.0" y2="1129.1" stroke="#0e0f12" stroke-width="1.12" opacity="0.64"/>
<line x1="1130.3" y1="1117.0" x2="1134.5" y2="1129.4" stroke="#0e0f12" stroke-width="1.12" opacity="0.64"/>
<line x1="1138.9" y1="1119.0" x2="1142.0" y2="1130.0" stroke="#0e0f12" stroke-width="1.12" opacity="0.64"/>
<line x1="1147.4" y1="1121.1" x2="1149.3" y2="1131.6" stroke="#0e0f12" stroke-width="1.12" opacity="0.64"/>
<line x1="1155.9" y1="1123.2" x2="1156.5" y2="1133.6" stroke="#0e0f12" stroke-width="1.12" opacity="0.64"/>
<line x1="1164.4" y1="1125.4" x2="1163.8" y2="1135.7" stroke="#0e0f12" stroke-width="1.12" opacity="0.64"/>
<line x1="1172.1" y1="1129.4" x2="1170.8" y2="1138.2" stroke="#0e0f12" stroke-width="1.12" opacity="0.64"/>
<line x1="1179.7" y1="1133.8" x2="1177.3" y2="1142.0" stroke="#0e0f12" stroke-width="1.12" opacity="0.64"/>
<line x1="1187.2" y1="1138.3" x2="1183.7" y2="1145.8" stroke="#0e0f12" stroke-width="1.12" opacity="0.64"/>
<line x1="1193.8" y1="1144.0" x2="1190.1" y2="1149.7" stroke="#0e0f12" stroke-width="1.12" opacity="0.64"/>
<line x1="1200.4" y1="1149.8" x2="1195.9" y2="1154.5" stroke="#0e0f12" stroke-width="1.12" opacity="0.64"/></g>
<path d="M1594.5 1034.8 C1594.9 1032.0 1595.7 1023.5 1596.9 1017.9 C1598.1 1012.3 1598.5 1007.5 1601.7 1001.0 C1604.9 994.5 1609.8 985.7 1616.2 979.2 C1622.7 972.8 1631.1 966.7 1640.4 962.3 C1649.7 957.9 1662.9 954.8 1671.8 952.7 C1680.7 950.6 1686.8 950.4 1693.6 949.8 C1700.4 949.2 1706.9 948.1 1712.9 949.0 C1718.9 949.9 1727.0 954.1 1729.8 955.1 L1810 960 L1810 1040 L1590 1040 Z" fill="url(#ty2)"/>
<path d="M1662.2 1034.8 C1662.1 1032.4 1661.5 1025.1 1661.7 1020.3 C1661.9 1015.5 1662.1 1010.2 1663.4 1005.8 C1664.7 1001.4 1666.0 997.3 1669.4 993.7 C1672.8 990.1 1677.9 986.7 1683.9 984.1 C1690.0 981.5 1698.1 979.4 1705.7 978.0 C1713.3 976.6 1722.5 975.8 1729.8 975.6 C1737.0 975.4 1743.5 975.8 1749.2 976.8 C1754.9 977.8 1761.3 980.9 1763.7 981.7 L1780 1040 L1660 1040 Z" fill="url(#rim2g)"/>
<path d="M1821.7 755.7 C1828.3 756.4 1838.5 758.3 1845.8 761.7 C1853.0 765.1 1860.0 769.4 1865.2 776.2 C1870.4 783.1 1874.6 792.7 1877.2 802.8 C1879.8 812.9 1880.7 826.2 1880.9 836.7 C1881.1 847.2 1880.3 856.9 1878.5 865.7 C1876.7 874.6 1873.4 880.9 1870.0 889.8 C1866.6 898.6 1862.9 909.5 1857.9 918.8 C1852.9 928.1 1845.8 939.1 1839.8 945.4 C1833.8 951.6 1828.8 953.7 1821.7 956.3 C1814.7 958.9 1807.6 960.7 1797.5 961.1 C1787.4 961.5 1772.5 959.7 1761.2 958.7 C1749.9 957.7 1737.8 956.7 1729.8 955.1 C1721.8 953.5 1716.5 953.4 1712.9 949.0 C1709.3 944.6 1709.1 935.1 1708.1 928.5 C1707.1 921.9 1706.9 916.5 1706.9 909.2 C1706.9 902.0 1707.3 893.1 1708.1 885.0 C1708.9 876.9 1709.9 868.4 1711.7 860.8 C1713.5 853.1 1716.0 846.0 1719.0 839.1 C1722.0 832.2 1725.8 826.2 1729.8 819.7 C1733.8 813.2 1738.3 806.4 1743.1 800.4 C1747.9 794.4 1753.8 788.3 1758.8 783.5 C1763.8 778.7 1768.1 774.8 1773.3 771.4 C1778.5 768.0 1784.8 765.3 1790.2 763.0 C1795.7 760.7 1800.8 758.6 1806.0 757.4 C1811.2 756.2 1815.1 755.0 1821.7 755.7Z" fill="url(#ty1)"/>
<clipPath id="c1"><path d="M1821.7 755.7 C1828.3 756.4 1838.5 758.3 1845.8 761.7 C1853.0 765.1 1860.0 769.4 1865.2 776.2 C1870.4 783.1 1874.6 792.7 1877.2 802.8 C1879.8 812.9 1880.7 826.2 1880.9 836.7 C1881.1 847.2 1880.3 856.9 1878.5 865.7 C1876.7 874.6 1873.4 880.9 1870.0 889.8 C1866.6 898.6 1862.9 909.5 1857.9 918.8 C1852.9 928.1 1845.8 939.1 1839.8 945.4 C1833.8 951.6 1828.8 953.7 1821.7 956.3 C1814.7 958.9 1807.6 960.7 1797.5 961.1 C1787.4 961.5 1772.5 959.7 1761.2 958.7 C1749.9 957.7 1737.8 956.7 1729.8 955.1 C1721.8 953.5 1716.5 953.4 1712.9 949.0 C1709.3 944.6 1709.1 935.1 1708.1 928.5 C1707.1 921.9 1706.9 916.5 1706.9 909.2 C1706.9 902.0 1707.3 893.1 1708.1 885.0 C1708.9 876.9 1709.9 868.4 1711.7 860.8 C1713.5 853.1 1716.0 846.0 1719.0 839.1 C1722.0 832.2 1725.8 826.2 1729.8 819.7 C1733.8 813.2 1738.3 806.4 1743.1 800.4 C1747.9 794.4 1753.8 788.3 1758.8 783.5 C1763.8 778.7 1768.1 774.8 1773.3 771.4 C1778.5 768.0 1784.8 765.3 1790.2 763.0 C1795.7 760.7 1800.8 758.6 1806.0 757.4 C1811.2 756.2 1815.1 755.0 1821.7 755.7Z"/></clipPath>
<g clip-path="url(#c1)"><path d="M1715.3 945.4 C1714.7 939.4 1711.7 921.7 1711.7 909.2 C1711.7 896.7 1712.7 882.6 1715.3 870.5 C1717.9 858.4 1722.2 847.6 1727.4 836.7 C1732.6 825.8 1739.5 814.5 1746.7 805.2 C1754.0 795.9 1762.4 787.7 1770.9 781.1 C1779.4 774.5 1789.0 768.8 1797.5 765.4 C1806.0 762.0 1817.7 761.3 1821.7 760.5" fill="none" stroke="#0b0b0d" stroke-width="1.2" opacity="0.75"/>
<path d="M1727.4 947.8 C1726.8 941.4 1723.8 921.7 1723.8 909.2 C1723.8 896.7 1724.8 884.6 1727.4 872.9 C1730.0 861.2 1734.3 849.6 1739.5 839.1 C1744.7 828.6 1751.5 818.8 1758.8 810.1 C1766.0 801.4 1774.5 793.4 1783.0 787.1 C1791.5 780.9 1801.1 775.8 1809.6 772.6 C1818.0 769.4 1829.7 768.6 1833.7 767.8" fill="none" stroke="#0b0b0d" stroke-width="1.2" opacity="0.75"/>
<path d="M1737.1 950.2 C1736.7 943.4 1734.5 921.7 1734.7 909.2 C1734.9 896.7 1735.7 886.4 1738.3 875.3 C1740.9 864.2 1745.2 852.8 1750.4 842.7 C1755.6 832.6 1762.7 823.1 1769.7 814.9 C1776.8 806.6 1784.5 799.0 1792.7 793.2 C1801.0 787.4 1810.8 782.7 1819.2 779.9 C1827.7 777.1 1839.4 776.8 1843.4 776.2" fill="none" stroke="#0b0b0d" stroke-width="1.2" opacity="0.75"/>
<path d="M1749.2 952.7 C1748.8 945.9 1746.5 923.9 1746.7 911.6 C1746.9 899.3 1747.8 889.7 1750.4 879.0 C1753.0 868.3 1757.5 857.2 1762.5 847.5 C1767.5 837.8 1773.8 828.9 1780.6 821.0 C1787.4 813.1 1795.5 805.9 1803.5 800.4 C1811.5 794.9 1820.6 790.7 1828.9 788.3 C1837.2 785.9 1849.1 786.3 1853.1 785.9" fill="none" stroke="#0b0b0d" stroke-width="1.2" opacity="0.75"/>
<path d="M1763.7 955.1 C1763.1 948.2 1760.0 926.1 1760.0 914.0 C1760.0 901.9 1761.1 892.9 1763.7 882.6 C1766.3 872.3 1770.9 861.5 1775.7 852.4 C1780.5 843.3 1786.2 835.5 1792.7 828.2 C1799.2 821.0 1806.8 813.9 1814.4 808.9 C1822.1 803.9 1830.9 800.0 1838.6 798.0 C1846.2 796.0 1856.7 797.0 1860.3 796.8" fill="none" stroke="#0b0b0d" stroke-width="1.2" opacity="0.75"/>
<line x1="1716.4" y1="944.7" x2="1725.4" y2="939.2" stroke="#0b0b0d" stroke-width="0.96" opacity="0.60"/>
<line x1="1715.5" y1="935.3" x2="1724.5" y2="929.8" stroke="#0b0b0d" stroke-width="0.96" opacity="0.60"/>
<line x1="1714.6" y1="925.8" x2="1723.7" y2="920.5" stroke="#0b0b0d" stroke-width="0.96" opacity="0.60"/>
<line x1="1713.6" y1="916.3" x2="1722.8" y2="911.1" stroke="#0b0b0d" stroke-width="0.96" opacity="0.60"/>
<line x1="1713.1" y1="906.9" x2="1723.3" y2="901.8" stroke="#0b0b0d" stroke-width="0.96" opacity="0.60"/>
<line x1="1714.0" y1="897.4" x2="1724.2" y2="892.5" stroke="#0b0b0d" stroke-width="0.96" opacity="0.60"/>
<line x1="1714.9" y1="888.0" x2="1725.2" y2="883.1" stroke="#0b0b0d" stroke-width="0.96" opacity="0.60"/>
<line x1="1715.8" y1="878.5" x2="1726.1" y2="873.8" stroke="#0b0b0d" stroke-width="0.96" opacity="0.60"/>
<line x1="1717.1" y1="869.2" x2="1729.0" y2="864.9" stroke="#0b0b0d" stroke-width="0.96" opacity="0.60"/>
<line x1="1720.3" y1="860.2" x2="1732.1" y2="856.1" stroke="#0b0b0d" stroke-width="0.96" opacity="0.60"/>
<line x1="1723.5" y1="851.3" x2="1735.3" y2="847.2" stroke="#0b0b0d" stroke-width="0.96" opacity="0.60"/>
<line x1="1726.7" y1="842.3" x2="1738.7" y2="838.5" stroke="#0b0b0d" stroke-width="0.96" opacity="0.60"/>
<line x1="1730.6" y1="833.7" x2="1743.8" y2="830.6" stroke="#0b0b0d" stroke-width="0.96" opacity="0.60"/>
<line x1="1735.6" y1="825.7" x2="1748.9" y2="822.8" stroke="#0b0b0d" stroke-width="0.96" opacity="0.60"/>
<line x1="1740.6" y1="817.6" x2="1754.1" y2="815.0" stroke="#0b0b0d" stroke-width="0.96" opacity="0.60"/>
<line x1="1745.7" y1="809.6" x2="1759.9" y2="807.6" stroke="#0b0b0d" stroke-width="0.96" opacity="0.60"/>
<line x1="1751.5" y1="802.2" x2="1766.6" y2="801.1" stroke="#0b0b0d" stroke-width="0.96" opacity="0.60"/>
<line x1="1758.2" y1="795.5" x2="1773.3" y2="794.6" stroke="#0b0b0d" stroke-width="0.96" opacity="0.60"/>
<line x1="1765.0" y1="788.8" x2="1780.1" y2="788.1" stroke="#0b0b0d" stroke-width="0.96" opacity="0.60"/>
<line x1="1771.9" y1="782.3" x2="1788.0" y2="783.2" stroke="#0b0b0d" stroke-width="0.96" opacity="0.60"/>
<line x1="1779.8" y1="777.2" x2="1796.2" y2="778.6" stroke="#0b0b0d" stroke-width="0.96" opacity="0.60"/>
<line x1="1788.0" y1="772.4" x2="1804.4" y2="774.1" stroke="#0b0b0d" stroke-width="0.96" opacity="0.60"/>
<line x1="1796.3" y1="767.8" x2="1813.2" y2="771.0" stroke="#0b0b0d" stroke-width="0.96" opacity="0.60"/>
<line x1="1805.2" y1="764.8" x2="1822.4" y2="769.1" stroke="#0b0b0d" stroke-width="0.96" opacity="0.60"/>
<line x1="1814.5" y1="762.9" x2="1831.6" y2="767.3" stroke="#0b0b0d" stroke-width="0.96" opacity="0.60"/>
<line x1="1727.6" y1="939.6" x2="1736.0" y2="949.0" stroke="#0b0b0d" stroke-width="0.96" opacity="0.60"/>
<line x1="1726.8" y1="930.3" x2="1735.5" y2="939.8" stroke="#0b0b0d" stroke-width="0.96" opacity="0.60"/>
<line x1="1725.9" y1="921.0" x2="1734.9" y2="930.7" stroke="#0b0b0d" stroke-width="0.96" opacity="0.60"/>
<line x1="1725.1" y1="911.7" x2="1734.3" y2="921.5" stroke="#0b0b0d" stroke-width="0.96" opacity="0.60"/>
<line x1="1725.6" y1="902.4" x2="1733.9" y2="912.3" stroke="#0b0b0d" stroke-width="0.96" opacity="0.60"/>
<line x1="1726.5" y1="893.1" x2="1734.2" y2="903.1" stroke="#0b0b0d" stroke-width="0.96" opacity="0.60"/>
<line x1="1727.4" y1="883.8" x2="1735.2" y2="894.0" stroke="#0b0b0d" stroke-width="0.96" opacity="0.60"/>
<line x1="1728.3" y1="874.5" x2="1736.2" y2="884.8" stroke="#0b0b0d" stroke-width="0.96" opacity="0.60"/>
<line x1="1731.2" y1="865.6" x2="1737.4" y2="875.7" stroke="#0b0b0d" stroke-width="0.96" opacity="0.60"/>
<line x1="1734.3" y1="856.8" x2="1740.2" y2="867.0" stroke="#0b0b0d" stroke-width="0.96" opacity="0.60"/>
<line x1="1737.5" y1="848.0" x2="1743.4" y2="858.4" stroke="#0b0b0d" stroke-width="0.96" opacity="0.60"/>
<line x1="1740.9" y1="839.3" x2="1746.6" y2="849.8" stroke="#0b0b0d" stroke-width="0.96" opacity="0.60"/>
<line x1="1745.9" y1="831.5" x2="1750.0" y2="841.3" stroke="#0b0b0d" stroke-width="0.96" opacity="0.60"/>
<line x1="1751.1" y1="823.7" x2="1755.3" y2="833.7" stroke="#0b0b0d" stroke-width="0.96" opacity="0.60"/>
<line x1="1756.3" y1="815.9" x2="1760.5" y2="826.1" stroke="#0b0b0d" stroke-width="0.96" opacity="0.60"/>
<line x1="1762.1" y1="808.6" x2="1765.8" y2="818.6" stroke="#0b0b0d" stroke-width="0.96" opacity="0.60"/>
<line x1="1768.8" y1="802.1" x2="1771.6" y2="811.6" stroke="#0b0b0d" stroke-width="0.96" opacity="0.60"/>
<line x1="1775.6" y1="795.7" x2="1778.3" y2="805.3" stroke="#0b0b0d" stroke-width="0.96" opacity="0.60"/>
<line x1="1782.4" y1="789.2" x2="1785.0" y2="798.9" stroke="#0b0b0d" stroke-width="0.96" opacity="0.60"/>
<line x1="1790.2" y1="784.3" x2="1791.8" y2="792.8" stroke="#0b0b0d" stroke-width="0.96" opacity="0.60"/>
<line x1="1798.4" y1="779.8" x2="1799.9" y2="788.4" stroke="#0b0b0d" stroke-width="0.96" opacity="0.60"/>
<line x1="1806.7" y1="775.4" x2="1808.1" y2="784.3" stroke="#0b0b0d" stroke-width="0.96" opacity="0.60"/>
<line x1="1815.4" y1="772.4" x2="1816.3" y2="780.3" stroke="#0b0b0d" stroke-width="0.96" opacity="0.60"/>
<line x1="1824.6" y1="770.6" x2="1825.2" y2="778.0" stroke="#0b0b0d" stroke-width="0.96" opacity="0.60"/>
<line x1="1833.8" y1="768.8" x2="1834.3" y2="776.6" stroke="#0b0b0d" stroke-width="0.96" opacity="0.60"/>
<line x1="1738.3" y1="949.6" x2="1747.5" y2="944.4" stroke="#0b0b0d" stroke-width="0.96" opacity="0.60"/>
<line x1="1737.7" y1="940.4" x2="1747.0" y2="935.5" stroke="#0b0b0d" stroke-width="0.96" opacity="0.60"/>
<line x1="1737.2" y1="931.3" x2="1746.4" y2="926.6" stroke="#0b0b0d" stroke-width="0.96" opacity="0.60"/>
<line x1="1736.6" y1="922.1" x2="1745.9" y2="917.6" stroke="#0b0b0d" stroke-width="0.96" opacity="0.60"/>
<line x1="1736.2" y1="913.0" x2="1745.9" y2="908.7" stroke="#0b0b0d" stroke-width="0.96" opacity="0.60"/>
<line x1="1736.5" y1="903.9" x2="1746.8" y2="899.8" stroke="#0b0b0d" stroke-width="0.96" opacity="0.60"/>
<line x1="1737.5" y1="894.8" x2="1747.8" y2="890.9" stroke="#0b0b0d" stroke-width="0.96" opacity="0.60"/>
<line x1="1738.4" y1="885.7" x2="1748.8" y2="882.0" stroke="#0b0b0d" stroke-width="0.96" opacity="0.60"/>
<line x1="1739.6" y1="876.6" x2="1751.2" y2="873.5" stroke="#0b0b0d" stroke-width="0.96" opacity="0.60"/>
<line x1="1742.4" y1="867.9" x2="1754.4" y2="865.1" stroke="#0b0b0d" stroke-width="0.96" opacity="0.60"/>
<line x1="1745.6" y1="859.4" x2="1757.6" y2="856.8" stroke="#0b0b0d" stroke-width="0.96" opacity="0.60"/>
<line x1="1748.8" y1="850.8" x2="1760.8" y2="848.4" stroke="#0b0b0d" stroke-width="0.96" opacity="0.60"/>
<line x1="1752.2" y1="842.3" x2="1765.5" y2="840.9" stroke="#0b0b0d" stroke-width="0.96" opacity="0.60"/>
<line x1="1757.4" y1="834.8" x2="1770.6" y2="833.5" stroke="#0b0b0d" stroke-width="0.96" opacity="0.60"/>
<line x1="1762.6" y1="827.3" x2="1775.6" y2="826.1" stroke="#0b0b0d" stroke-width="0.96" opacity="0.60"/>
<line x1="1767.9" y1="819.8" x2="1781.1" y2="819.1" stroke="#0b0b0d" stroke-width="0.96" opacity="0.60"/>
<line x1="1773.7" y1="812.8" x2="1787.7" y2="813.0" stroke="#0b0b0d" stroke-width="0.96" opacity="0.60"/>
<line x1="1780.4" y1="806.5" x2="1794.3" y2="807.0" stroke="#0b0b0d" stroke-width="0.96" opacity="0.60"/>
<line x1="1787.1" y1="800.3" x2="1801.0" y2="801.0" stroke="#0b0b0d" stroke-width="0.96" opacity="0.60"/>
<line x1="1793.9" y1="794.2" x2="1808.7" y2="796.7" stroke="#0b0b0d" stroke-width="0.96" opacity="0.60"/>
<line x1="1801.9" y1="789.9" x2="1816.8" y2="792.8" stroke="#0b0b0d" stroke-width="0.96" opacity="0.60"/>
<line x1="1810.1" y1="785.8" x2="1824.8" y2="789.0" stroke="#0b0b0d" stroke-width="0.96" opacity="0.60"/>
<line x1="1818.4" y1="781.9" x2="1833.5" y2="787.0" stroke="#0b0b0d" stroke-width="0.96" opacity="0.60"/>
<line x1="1827.1" y1="779.8" x2="1842.3" y2="786.0" stroke="#0b0b0d" stroke-width="0.96" opacity="0.60"/>
<line x1="1836.2" y1="778.4" x2="1851.2" y2="785.1" stroke="#0b0b0d" stroke-width="0.96" opacity="0.60"/>
<line x1="1750.2" y1="944.9" x2="1762.2" y2="954.0" stroke="#0b0b0d" stroke-width="0.96" opacity="0.60"/>
<line x1="1749.6" y1="936.1" x2="1761.5" y2="945.5" stroke="#0b0b0d" stroke-width="0.96" opacity="0.60"/>
<line x1="1749.0" y1="927.2" x2="1760.7" y2="937.0" stroke="#0b0b0d" stroke-width="0.96" opacity="0.60"/>
<line x1="1748.5" y1="918.3" x2="1760.0" y2="928.5" stroke="#0b0b0d" stroke-width="0.96" opacity="0.60"/>
<line x1="1748.4" y1="909.5" x2="1759.3" y2="920.0" stroke="#0b0b0d" stroke-width="0.96" opacity="0.60"/>
<line x1="1749.3" y1="900.7" x2="1758.9" y2="911.5" stroke="#0b0b0d" stroke-width="0.96" opacity="0.60"/>
<line x1="1750.3" y1="891.8" x2="1759.9" y2="903.0" stroke="#0b0b0d" stroke-width="0.96" opacity="0.60"/>
<line x1="1751.3" y1="883.0" x2="1760.9" y2="894.5" stroke="#0b0b0d" stroke-width="0.96" opacity="0.60"/>
<line x1="1753.7" y1="874.5" x2="1762.1" y2="886.1" stroke="#0b0b0d" stroke-width="0.96" opacity="0.60"/>
<line x1="1756.8" y1="866.2" x2="1764.1" y2="877.9" stroke="#0b0b0d" stroke-width="0.96" opacity="0.60"/>
<line x1="1760.0" y1="857.9" x2="1767.2" y2="869.9" stroke="#0b0b0d" stroke-width="0.96" opacity="0.60"/>
<line x1="1763.2" y1="849.7" x2="1770.4" y2="862.0" stroke="#0b0b0d" stroke-width="0.96" opacity="0.60"/>
<line x1="1767.9" y1="842.2" x2="1773.7" y2="854.1" stroke="#0b0b0d" stroke-width="0.96" opacity="0.60"/>
<line x1="1772.8" y1="834.8" x2="1777.9" y2="846.8" stroke="#0b0b0d" stroke-width="0.96" opacity="0.60"/>
<line x1="1777.9" y1="827.5" x2="1782.8" y2="839.8" stroke="#0b0b0d" stroke-width="0.96" opacity="0.60"/>
<line x1="1783.3" y1="820.6" x2="1787.8" y2="832.9" stroke="#0b0b0d" stroke-width="0.96" opacity="0.60"/>
<line x1="1789.8" y1="814.5" x2="1793.0" y2="826.1" stroke="#0b0b0d" stroke-width="0.96" opacity="0.60"/>
<line x1="1796.4" y1="808.6" x2="1799.4" y2="820.5" stroke="#0b0b0d" stroke-width="0.96" opacity="0.60"/>
<line x1="1803.0" y1="802.6" x2="1805.7" y2="814.8" stroke="#0b0b0d" stroke-width="0.96" opacity="0.60"/>
<line x1="1810.8" y1="798.4" x2="1812.2" y2="809.3" stroke="#0b0b0d" stroke-width="0.96" opacity="0.60"/>
<line x1="1818.7" y1="794.5" x2="1819.6" y2="805.2" stroke="#0b0b0d" stroke-width="0.96" opacity="0.60"/>
<line x1="1826.8" y1="790.7" x2="1827.4" y2="801.7" stroke="#0b0b0d" stroke-width="0.96" opacity="0.60"/>
<line x1="1835.3" y1="788.8" x2="1835.2" y2="798.3" stroke="#0b0b0d" stroke-width="0.96" opacity="0.60"/>
<line x1="1844.1" y1="787.9" x2="1843.4" y2="796.6" stroke="#0b0b0d" stroke-width="0.96" opacity="0.60"/>
<line x1="1853.0" y1="787.0" x2="1851.9" y2="796.1" stroke="#0b0b0d" stroke-width="0.96" opacity="0.60"/></g>
<path d="M1836.2 811.3 C1841.0 812.3 1847.1 815.5 1850.7 819.7 C1854.3 823.9 1856.7 829.0 1857.9 836.7 C1859.1 844.4 1859.5 855.2 1857.9 865.7 C1856.3 876.2 1852.6 888.6 1848.2 899.5 C1843.8 910.4 1837.3 922.9 1831.3 930.9 C1825.3 938.9 1817.6 944.2 1812.0 947.8 C1806.4 951.4 1801.9 952.5 1797.5 952.7 C1793.1 952.9 1788.8 951.8 1785.4 949.0 C1782.0 946.2 1779.0 941.5 1777.0 935.7 C1775.0 929.9 1773.3 922.5 1773.3 914.0 C1773.3 905.5 1774.6 895.1 1777.0 885.0 C1779.4 874.9 1783.2 863.3 1787.8 853.6 C1792.4 843.9 1799.0 833.6 1804.7 827.0 C1810.4 820.4 1816.5 816.3 1821.7 813.7 C1827.0 811.1 1831.4 810.3 1836.2 811.3Z" fill="#f1f2f8"/>
<path d="M1837.4 816.8 C1841.6 817.6 1846.6 819.9 1849.5 823.4 C1852.4 826.9 1854.1 830.8 1855.0 837.9 C1855.9 845.0 1856.4 855.6 1854.8 865.7 C1853.2 875.8 1849.6 887.8 1845.3 898.3 C1841.0 908.8 1834.7 921.0 1828.9 928.5 C1823.2 936.0 1815.8 940.4 1810.8 943.5 C1805.8 946.6 1802.3 947.2 1798.7 947.3 C1795.1 947.4 1791.7 946.5 1789.0 944.2 C1786.3 941.9 1784.1 938.3 1782.5 933.3 C1780.9 928.3 1779.3 921.9 1779.4 914.0 C1779.5 906.1 1780.7 895.9 1783.0 886.2 C1785.3 876.5 1788.9 865.1 1793.1 856.0 C1797.3 846.9 1803.2 837.5 1808.4 831.3 C1813.6 825.0 1819.3 820.9 1824.1 818.5 C1828.9 816.1 1833.2 816.0 1837.4 816.8Z" fill="url(#rim1)"/>
<path d="M1822.5 817.4 C1817.2 820.2 1812.9 826.5 1808.5 832.2 C1804.1 837.9 1799.9 844.8 1796.2 851.5 C1792.5 858.2 1789.1 865.5 1786.6 872.5 C1784.1 879.5 1782.1 887.4 1781.4 893.5 C1780.7 899.6 1780.9 905.3 1782.2 909.2 C1783.5 913.1 1786.3 916.5 1789.2 917.1 C1792.1 917.7 1795.9 915.8 1799.7 912.7 C1803.5 909.6 1807.6 904.2 1812.0 898.7 C1816.4 893.2 1821.3 886.5 1826.0 879.5 C1830.7 872.5 1836.2 863.7 1840.0 856.7 C1843.8 849.7 1847.1 843.0 1848.7 837.5 C1850.3 832.0 1851.0 827.1 1849.6 823.5 C1848.1 819.9 1844.5 816.6 1840.0 815.6 C1835.5 814.6 1827.8 814.6 1822.5 817.4Z" fill="url(#hole1)"/>
<clipPath id="ch"><path d="M1822.5 817.4 C1817.2 820.2 1812.9 826.5 1808.5 832.2 C1804.1 837.9 1799.9 844.8 1796.2 851.5 C1792.5 858.2 1789.1 865.5 1786.6 872.5 C1784.1 879.5 1782.1 887.4 1781.4 893.5 C1780.7 899.6 1780.9 905.3 1782.2 909.2 C1783.5 913.1 1786.3 916.5 1789.2 917.1 C1792.1 917.7 1795.9 915.8 1799.7 912.7 C1803.5 909.6 1807.6 904.2 1812.0 898.7 C1816.4 893.2 1821.3 886.5 1826.0 879.5 C1830.7 872.5 1836.2 863.7 1840.0 856.7 C1843.8 849.7 1847.1 843.0 1848.7 837.5 C1850.3 832.0 1851.0 827.1 1849.6 823.5 C1848.1 819.9 1844.5 816.6 1840.0 815.6 C1835.5 814.6 1827.8 814.6 1822.5 817.4Z"/></clipPath><g clip-path="url(#ch)"><line x1="1790" y1="835.6" x2="1814" y2="844.3" stroke="#6d6df6" stroke-width="1.35"/></g>
<rect x="0" y="1137" width="1920" height="23" fill="#000" opacity="0.16"/>
</g></svg>
<div class="b " style="left:0px;top:23px;width:72px;height:24px;background:#cccccc;box-shadow:inset 1px 1px 0.5px #e1e1e1,inset -1px -1px 1px #9b9b9b,inset 2px 2px 1.5px #d7d7d7,inset -2px -2px 2px #afafaf;"><span class="t" style="transform:scaleX(0.928);">subob</span></div>
<div class="b " style="left:72px;top:23px;width:72px;height:24px;background:#8c8ce4;box-shadow:inset 1px 1px 1px #6a6aad,inset -1px -1px 0.5px #b5b5ed,inset 2px 2px 2px #7979c6,inset -2px -2px 1.5px #a0a0e8;"><span class="t" style="transform:scaleX(1.083);">tri</span></div>
<div class="b " style="left:144px;top:23px;width:72px;height:24px;background:#cccccc;box-shadow:inset 1px 1px 0.5px #e1e1e1,inset -1px -1px 1px #9b9b9b,inset 2px 2px 1.5px #d7d7d7,inset -2px -2px 2px #afafaf;"><span class="t" style="transform:scaleX(0.966);">point</span></div>
<div class="b " style="left:216px;top:23px;width:72px;height:24px;background:#cccccc;box-shadow:inset 1px 1px 0.5px #e1e1e1,inset -1px -1px 1px #9b9b9b,inset 2px 2px 1.5px #d7d7d7,inset -2px -2px 2px #afafaf;"><span class="t" style="transform:scaleX(0.968);">build</span></div>
<div class="b " style="left:288px;top:23px;width:72px;height:24px;background:#cccccc;box-shadow:inset 1px 1px 0.5px #e1e1e1,inset -1px -1px 1px #9b9b9b,inset 2px 2px 1.5px #d7d7d7,inset -2px -2px 2px #afafaf;"><span class="t" style="transform:scaleX(0.88);">map</span></div>
<div class="b " style="left:360px;top:23px;width:72px;height:24px;background:#cccccc;box-shadow:inset 1px 1px 0.5px #e1e1e1,inset -1px -1px 1px #9b9b9b,inset 2px 2px 1.5px #d7d7d7,inset -2px -2px 2px #afafaf;"><span class="t" style="transform:scaleX(1.026);">cutout</span></div>
<div class="b " style="left:432px;top:23px;width:72px;height:24px;background:#cccccc;box-shadow:inset 1px 1px 0.5px #e1e1e1,inset -1px -1px 1px #9b9b9b,inset 2px 2px 1.5px #d7d7d7,inset -2px -2px 2px #afafaf;"><span class="t" style="transform:scaleX(0.935);">page</span></div>
<div class="b " style="left:504px;top:23px;width:72px;height:24px;background:#cccccc;box-shadow:inset 1px 1px 0.5px #e1e1e1,inset -1px -1px 1px #9b9b9b,inset 2px 2px 1.5px #d7d7d7,inset -2px -2px 2px #afafaf;"><span class="t" style="transform:scaleX(0.908);">view</span></div>
<div class="b " style="left:0px;top:47px;width:96px;height:24px;background:#cccccc;box-shadow:inset 1px 1px 0.5px #e1e1e1,inset -1px -1px 1px #9b9b9b,inset 2px 2px 1.5px #d7d7d7,inset -2px -2px 2px #afafaf;"><span class="t" style="transform:scaleX(0.99);">all</span></div>
<div class="b " style="left:96px;top:47px;width:72px;height:24px;background:#979797;box-shadow:inset 1px 1px 0.5px #c2c2c2,inset -1px -1px 1px #727272,inset 2px 2px 1.5px #adadad,inset -2px -2px 2px #818181;"><span class="t" style="transform:scaleX(0.937);">side</span></div>
<div class="b " style="left:168px;top:47px;width:72px;height:24px;background:#979797;box-shadow:inset 1px 1px 0.5px #c2c2c2,inset -1px -1px 1px #727272,inset 2px 2px 1.5px #adadad,inset -2px -2px 2px #818181;"><span class="t" style="transform:scaleX(0.996);">front</span></div>
<div class="b " style="left:240px;top:47px;width:72px;height:24px;background:#de8c32;box-shadow:inset 1px 1px 1px #a86a26,inset -1px -1px 0.5px #e9b57b,inset 2px 2px 2px #c1792b,inset -2px -2px 1.5px #e3a056;"><span class="t" style="transform:scaleX(0.939);">top</span></div>
<div class="b " style="left:312px;top:47px;width:72px;height:24px;background:#979797;box-shadow:inset 1px 1px 0.5px #c2c2c2,inset -1px -1px 1px #727272,inset 2px 2px 1.5px #adadad,inset -2px -2px 2px #818181;"></div>
<div class="b " style="left:0px;top:71px;width:96px;height:24px;background:#cccccc;box-shadow:inset 1px 1px 0.5px #e1e1e1,inset -1px -1px 1px #9b9b9b,inset 2px 2px 1.5px #d7d7d7,inset -2px -2px 2px #afafaf;"><span class="t" style="transform:scaleX(0.916);">none</span></div>
<div class="b " style="left:96px;top:71px;width:72px;height:24px;background:#979797;box-shadow:inset 1px 1px 0.5px #c2c2c2,inset -1px -1px 1px #727272,inset 2px 2px 1.5px #adadad,inset -2px -2px 2px #818181;"></div>
<div class="b " style="left:168px;top:71px;width:72px;height:24px;background:#979797;box-shadow:inset 1px 1px 0.5px #c2c2c2,inset -1px -1px 1px #727272,inset 2px 2px 1.5px #adadad,inset -2px -2px 2px #818181;"></div>
<div class="b " style="left:240px;top:71px;width:72px;height:24px;background:#979797;box-shadow:inset 1px 1px 0.5px #c2c2c2,inset -1px -1px 1px #727272,inset 2px 2px 1.5px #adadad,inset -2px -2px 2px #818181;"></div>
<div class="b " style="left:312px;top:71px;width:72px;height:24px;background:#979797;box-shadow:inset 1px 1px 0.5px #c2c2c2,inset -1px -1px 1px #727272,inset 2px 2px 1.5px #adadad,inset -2px -2px 2px #818181;"></div>
<div class="b " style="left:0px;top:95px;width:96px;height:24px;background:#cccccc;box-shadow:inset 1px 1px 0.5px #e1e1e1,inset -1px -1px 1px #9b9b9b,inset 2px 2px 1.5px #d7d7d7,inset -2px -2px 2px #afafaf;"><span class="t" style="transform:scaleX(0.936);">merge</span></div>
<div class="b " style="left:96px;top:95px;width:72px;height:24px;background:#979797;box-shadow:inset 1px 1px 0.5px #c2c2c2,inset -1px -1px 1px #727272,inset 2px 2px 1.5px #adadad,inset -2px -2px 2px #818181;"></div>
<div class="b " style="left:168px;top:95px;width:72px;height:24px;background:#979797;box-shadow:inset 1px 1px 0.5px #c2c2c2,inset -1px -1px 1px #727272,inset 2px 2px 1.5px #adadad,inset -2px -2px 2px #818181;"></div>
<div class="b " style="left:240px;top:95px;width:72px;height:24px;background:#979797;box-shadow:inset 1px 1px 0.5px #c2c2c2,inset -1px -1px 1px #727272,inset 2px 2px 1.5px #adadad,inset -2px -2px 2px #818181;"></div>
<div class="b " style="left:312px;top:95px;width:72px;height:24px;background:#979797;box-shadow:inset 1px 1px 0.5px #c2c2c2,inset -1px -1px 1px #727272,inset 2px 2px 1.5px #adadad,inset -2px -2px 2px #818181;"></div>
<div class="b " style="left:0px;top:119px;width:96px;height:24px;background:#cccccc;box-shadow:inset 1px 1px 0.5px #e1e1e1,inset -1px -1px 1px #9b9b9b,inset 2px 2px 1.5px #d7d7d7,inset -2px -2px 2px #afafaf;"><span class="t" style="font-weight:bold;-webkit-text-stroke:0;transform:scaleX(0.8);">–</span></div>
<div class="b " style="left:96px;top:119px;width:72px;height:24px;background:#979797;box-shadow:inset 1px 1px 0.5px #c2c2c2,inset -1px -1px 1px #727272,inset 2px 2px 1.5px #adadad,inset -2px -2px 2px #818181;"></div>
<div class="b " style="left:168px;top:119px;width:72px;height:24px;background:#979797;box-shadow:inset 1px 1px 0.5px #c2c2c2,inset -1px -1px 1px #727272,inset 2px 2px 1.5px #adadad,inset -2px -2px 2px #818181;"></div>
<div class="b " style="left:240px;top:119px;width:72px;height:24px;background:#979797;box-shadow:inset 1px 1px 0.5px #c2c2c2,inset -1px -1px 1px #727272,inset 2px 2px 1.5px #adadad,inset -2px -2px 2px #818181;"></div>
<div class="b " style="left:312px;top:119px;width:72px;height:24px;background:#979797;box-shadow:inset 1px 1px 0.5px #c2c2c2,inset -1px -1px 1px #727272,inset 2px 2px 1.5px #adadad,inset -2px -2px 2px #818181;"></div>
<div class="b " style="left:0px;top:143px;width:96px;height:24px;background:#a3a3ff;box-shadow:inset 1px 1px 0.5px #c9c9ff,inset -1px -1px 1px #7b7bc1,inset 2px 2px 1.5px #b7b7ff,inset -2px -2px 2px #8c8cdb;"><span class="t" style="transform:scaleX(0.712);-webkit-text-stroke:0.6px #000;">XXX</span></div>
<div class="b " style="left:96px;top:143px;width:288px;height:24px;background:#cccccc;box-shadow:inset 1px 1px 0.5px #e1e1e1,inset -1px -1px 1px #9b9b9b,inset 2px 2px 1.5px #d7d7d7,inset -2px -2px 2px #afafaf;"><span class="t" style="transform:scaleX(0.723);-webkit-text-stroke:0.6px #000;">OPEN ROOF</span></div>
<div class="b " style="left:0px;top:167px;width:120px;height:24px;background:#ffffa0;box-shadow:inset 1px 1px 0.5px #ffffc7,inset -1px -1px 1px #c1c179,inset 2px 2px 1.5px #ffffb4,inset -2px -2px 2px #dbdb89;"><span class="t" style="transform:scaleX(0.973);">auto</span></div>
<div class="b " style="left:120px;top:167px;width:72px;height:24px;background:#e4b98c;box-shadow:inset 1px 1px 1px #ad8c6a,inset -1px -1px 0.5px #edd2b5,inset 2px 2px 2px #c6a079,inset -2px -2px 1.5px #e8c5a0;"><span class="t" style="transform:scaleX(0.899);">lod1</span></div>
<div class="b " style="left:192px;top:167px;width:72px;height:24px;background:#ffd1a0;box-shadow:inset 1px 1px 0.5px #ffe4c7,inset -1px -1px 1px #c19e79,inset 2px 2px 1.5px #ffdbb4,inset -2px -2px 2px #dbb389;"><span class="t" style="transform:scaleX(0.935);">lod2</span></div>
<div class="b " style="left:264px;top:167px;width:72px;height:24px;background:#ffd1a0;box-shadow:inset 1px 1px 0.5px #ffe4c7,inset -1px -1px 1px #c19e79,inset 2px 2px 1.5px #ffdbb4,inset -2px -2px 2px #dbb389;"><span class="t" style="transform:scaleX(0.927);">lod3</span></div>
<div class="b " style="left:336px;top:167px;width:24px;height:24px;background:#979797;box-shadow:inset 1px 1px 0.5px #c2c2c2,inset -1px -1px 1px #727272,inset 2px 2px 1.5px #adadad,inset -2px -2px 2px #818181;"><span class="t" style="font-weight:bold;-webkit-text-stroke:0;transform:scaleX(0.8);">–</span></div>
<div class="b " style="left:360px;top:167px;width:24px;height:24px;background:#979797;box-shadow:inset 1px 1px 0.5px #c2c2c2,inset -1px -1px 1px #727272,inset 2px 2px 1.5px #adadad,inset -2px -2px 2px #818181;"><span class="t" style="font-weight:bold;-webkit-text-stroke:0;transform:scaleX(0.8);">+</span></div>
<div class="b " style="left:0px;top:191px;width:96px;height:24px;background:#a3a3ff;box-shadow:inset 1px 1px 0.5px #c9c9ff,inset -1px -1px 1px #7b7bc1,inset 2px 2px 1.5px #b7b7ff,inset -2px -2px 2px #8c8cdb;"><span class="t" style="transform:scaleX(0.994);">lod dist</span></div>
<div class="b " style="left:96px;top:191px;width:192px;height:24px;background:#a3a3ff;box-shadow:inset 1px 1px 0.5px #c9c9ff,inset -1px -1px 1px #7b7bc1,inset 2px 2px 1.5px #b7b7ff,inset -2px -2px 2px #8c8cdb;"><span class="t" style="transform:scaleX(0.928);">60 m</span></div>
<div class="b " style="left:0px;top:215px;width:144px;height:24px;background:#ffffa0;box-shadow:inset 1px 1px 0.5px #ffffc7,inset -1px -1px 1px #c1c179,inset 2px 2px 1.5px #ffffb4,inset -2px -2px 2px #dbdb89;"><span class="t" style="transform:scaleX(0.974);">131 tris</span></div>
<div class="b " style="left:144px;top:215px;width:144px;height:24px;background:#ffffa0;box-shadow:inset 1px 1px 0.5px #ffffc7,inset -1px -1px 1px #c1c179,inset 2px 2px 1.5px #ffffb4,inset -2px -2px 2px #dbdb89;"><span class="t" style="transform:scaleX(0.983);">81 pts</span></div>
<div class="b " style="left:0px;top:239px;width:144px;height:24px;background:#cccccc;box-shadow:inset 1px 1px 0.5px #e1e1e1,inset -1px -1px 1px #9b9b9b,inset 2px 2px 1.5px #d7d7d7,inset -2px -2px 2px #afafaf;"><span class="t" style="transform:scaleX(0.974);">131 tris</span></div>
<div class="b " style="left:144px;top:239px;width:144px;height:24px;background:#cccccc;box-shadow:inset 1px 1px 0.5px #e1e1e1,inset -1px -1px 1px #9b9b9b,inset 2px 2px 1.5px #d7d7d7,inset -2px -2px 2px #afafaf;"><span class="t" style="transform:scaleX(0.983);">81 pts</span></div>
<div class="b " style="left:0px;top:263px;width:288px;height:24px;background:#a3a3ff;box-shadow:inset 1px 1px 0.5px #c9c9ff,inset -1px -1px 1px #7b7bc1,inset 2px 2px 1.5px #b7b7ff,inset -2px -2px 2px #8c8cdb;"><span class="t" style="transform:scaleX(0.948);">undo drag points</span></div>
<div class="b " style="left:0px;top:287px;width:288px;height:24px;background:#ffd1a0;box-shadow:inset 1px 1px 0.5px #ffe4c7,inset -1px -1px 1px #c19e79,inset 2px 2px 1.5px #ffdbb4,inset -2px -2px 2px #dbb389;"><span class="t" style="transform:scaleX(0.968);">repair triangle mirroring</span></div>
<div class="b " style="left:0px;top:311px;width:192px;height:24px;background:#cccccc;box-shadow:inset 1px 1px 0.5px #e1e1e1,inset -1px -1px 1px #9b9b9b,inset 2px 2px 1.5px #d7d7d7,inset -2px -2px 2px #afafaf;"><span class="t" style="transform:scaleX(0.997);">triangle buttons :</span></div>
<div class="b " style="left:192px;top:311px;width:48px;height:24px;background:#8c8ce4;box-shadow:inset 1px 1px 1px #6a6aad,inset -1px -1px 0.5px #b5b5ed,inset 2px 2px 2px #7979c6,inset -2px -2px 1.5px #a0a0e8;"><span class="t" style="transform:scaleX(0.741);-webkit-text-stroke:0.6px #000;">NO</span></div>
<div class="b " style="left:240px;top:311px;width:48px;height:24px;background:#a3a3ff;box-shadow:inset 1px 1px 0.5px #c9c9ff,inset -1px -1px 1px #7b7bc1,inset 2px 2px 1.5px #b7b7ff,inset -2px -2px 2px #8c8cdb;"><span class="t" style="transform:scaleX(0.725);-webkit-text-stroke:0.6px #000;">YES</span></div>
<div class="b " style="left:0px;top:335px;width:144px;height:24px;background:#cccccc;box-shadow:inset 1px 1px 0.5px #e1e1e1,inset -1px -1px 1px #9b9b9b,inset 2px 2px 1.5px #d7d7d7,inset -2px -2px 2px #afafaf;"><span class="t" style="transform:scaleX(0.986);">box select :</span></div>
<div class="b " style="left:144px;top:335px;width:72px;height:24px;background:#fca23e;box-shadow:inset 1px 1px 0.5px #fdc98f,inset -1px -1px 1px #bf7b2f,inset 2px 2px 1.5px #fcb668,inset -2px -2px 2px #d88b35;"><span class="t" style="transform:scaleX(0.957);">facing</span></div>
<div class="b " style="left:216px;top:335px;width:72px;height:24px;background:#df8d33;box-shadow:inset 1px 1px 1px #a96b26,inset -1px -1px 0.5px #eab67c,inset 2px 2px 2px #c27a2c,inset -2px -2px 1.5px #e4a157;"><span class="t" style="transform:scaleX(0.99);">all</span></div>
<div class="b " style="left:0px;top:359px;width:144px;height:24px;background:#ffd1a0;box-shadow:inset 1px 1px 0.5px #ffe4c7,inset -1px -1px 1px #c19e79,inset 2px 2px 1.5px #ffdbb4,inset -2px -2px 2px #dbb389;"><span class="t" style="transform:scaleX(0.917);">C : clear</span></div>
<div class="b " style="left:144px;top:359px;width:144px;height:24px;background:#ffd1a0;box-shadow:inset 1px 1px 0.5px #ffe4c7,inset -1px -1px 1px #c19e79,inset 2px 2px 1.5px #ffdbb4,inset -2px -2px 2px #dbb389;"><span class="t" style="transform:scaleX(0.93);">A : all</span></div>
<div class="b " style="left:0px;top:383px;width:72px;height:24px;background:#cccccc;box-shadow:inset 1px 1px 0.5px #e1e1e1,inset -1px -1px 1px #9b9b9b,inset 2px 2px 1.5px #d7d7d7,inset -2px -2px 2px #afafaf;"><span class="t" style="transform:scaleX(0.901);">index</span></div>
<div class="b " style="left:72px;top:383px;width:216px;height:24px;background:#a1fafa;box-shadow:inset 1px 1px 0.5px #c8fcfc,inset -1px -1px 1px #7abebe,inset 2px 2px 1.5px #b5fbfb,inset -2px -2px 2px #8ad7d7;"><span class="t" style="transform:scaleX(0.983);">no triangles selected</span></div>
<div class="b " style="left:0px;top:407px;width:120px;height:24px;background:#a1faa1;box-shadow:inset 1px 1px 0.5px #c8fcc8,inset -1px -1px 1px #7abe7a,inset 2px 2px 1.5px #b5fbb5,inset -2px -2px 2px #8ad78a;"><span class="t" style="transform:scaleX(0.95);">unhide all</span></div>
<div class="b " style="left:120px;top:407px;width:168px;height:24px;background:#ffffa0;box-shadow:inset 1px 1px 0.5px #ffffc7,inset -1px -1px 1px #c1c179,inset 2px 2px 1.5px #ffffb4,inset -2px -2px 2px #dbdb89;"><span class="t" style="transform:scaleX(0.959);">hide unselected</span></div>
<div class="b " style="left:0px;top:896px;width:120px;height:24px;background:#ffffa0;box-shadow:inset 1px 1px 0.5px #ffffc7,inset -1px -1px 1px #c1c179,inset 2px 2px 1.5px #ffffb4,inset -2px -2px 2px #dbdb89;"><span class="t" style="transform:scaleX(0.968);">cols : 1</span></div>
<div class="b " style="left:120px;top:896px;width:96px;height:24px;background:#a3a3ff;box-shadow:inset 1px 1px 0.5px #c9c9ff,inset -1px -1px 1px #7b7bc1,inset 2px 2px 1.5px #b7b7ff,inset -2px -2px 2px #8c8cdb;"><span class="t" style="transform:scaleX(0.944);">clean</span></div>
<div class="b " style="left:216px;top:896px;width:96px;height:24px;background:#a3a3ff;box-shadow:inset 1px 1px 0.5px #c9c9ff,inset -1px -1px 1px #7b7bc1,inset 2px 2px 1.5px #b7b7ff,inset -2px -2px 2px #8c8cdb;"><span class="t" style="transform:scaleX(0.952);">dup</span></div>
<div class="b " style="left:0px;top:920px;width:192px;height:24px;background:#cccccc;box-shadow:inset 1px 1px 0.5px #e1e1e1,inset -1px -1px 1px #9b9b9b,inset 2px 2px 1.5px #d7d7d7,inset -2px -2px 2px #afafaf;"><span class="t" style="transform:scaleX(0.918);">M1_main</span></div>
<div class="b " style="left:192px;top:920px;width:96px;height:24px;background:#cccccc;box-shadow:inset 1px 1px 0.5px #e1e1e1,inset -1px -1px 1px #9b9b9b,inset 2px 2px 1.5px #d7d7d7,inset -2px -2px 2px #afafaf;"><span class="t" style="transform:scaleX(1.015);">6756 tri</span></div>
<div class="b " style="left:288px;top:920px;width:24px;height:96px;background:#a3a3ff;box-shadow:inset 1px 1px 0.5px #c9c9ff,inset -1px -1px 1px #7b7bc1,inset 2px 2px 1.5px #b7b7ff,inset -2px -2px 2px #8c8cdb;"></div>
<div class="b sl" style="left:0px;top:944px;width:96px;height:18px;background:#ff8c78;box-shadow:inset 1px 1px 0.5px #ffbcb0,inset -1px -1px 1px #c16a5b,inset 2px 2px 1.5px #ffa595,inset -2px -2px 2px #db7867;"></div>
<div class="b ar" style="left:96px;top:944px;width:24px;height:18px;background:#979797;box-shadow:inset 1px 1px 0.5px #c2c2c2,inset -1px -1px 1px #727272,inset 2px 2px 1.5px #adadad,inset -2px -2px 2px #818181;"><span class="t" style="">◀</span></div>
<div class="b ar" style="left:120px;top:944px;width:24px;height:18px;background:#979797;box-shadow:inset 1px 1px 0.5px #c2c2c2,inset -1px -1px 1px #727272,inset 2px 2px 1.5px #adadad,inset -2px -2px 2px #818181;"><span class="t" style="">▶</span></div>
<div class="b sl" style="left:0px;top:962px;width:96px;height:18px;background:#a0ffa0;box-shadow:inset 1px 1px 0.5px #c7ffc7,inset -1px -1px 1px #79c179,inset 2px 2px 1.5px #b4ffb4,inset -2px -2px 2px #89db89;"></div>
<div class="b ar" style="left:96px;top:962px;width:24px;height:18px;background:#979797;box-shadow:inset 1px 1px 0.5px #c2c2c2,inset -1px -1px 1px #727272,inset 2px 2px 1.5px #adadad,inset -2px -2px 2px #818181;"><span class="t" style="">◀</span></div>
<div class="b ar" style="left:120px;top:962px;width:24px;height:18px;background:#979797;box-shadow:inset 1px 1px 0.5px #c2c2c2,inset -1px -1px 1px #727272,inset 2px 2px 1.5px #adadad,inset -2px -2px 2px #818181;"><span class="t" style="">▶</span></div>
<div class="b sl" style="left:0px;top:980px;width:96px;height:18px;background:#a3a3ff;box-shadow:inset 1px 1px 0.5px #c9c9ff,inset -1px -1px 1px #7b7bc1,inset 2px 2px 1.5px #b7b7ff,inset -2px -2px 2px #8c8cdb;"></div>
<div class="b ar" style="left:96px;top:980px;width:24px;height:18px;background:#979797;box-shadow:inset 1px 1px 0.5px #c2c2c2,inset -1px -1px 1px #727272,inset 2px 2px 1.5px #adadad,inset -2px -2px 2px #818181;"><span class="t" style="">◀</span></div>
<div class="b ar" style="left:120px;top:980px;width:24px;height:18px;background:#979797;box-shadow:inset 1px 1px 0.5px #c2c2c2,inset -1px -1px 1px #727272,inset 2px 2px 1.5px #adadad,inset -2px -2px 2px #818181;"><span class="t" style="">▶</span></div>
<div class="b sl" style="left:0px;top:998px;width:96px;height:18px;background:#9b9b9b;box-shadow:inset 1px 1px 0.5px #c5c5c5,inset -1px -1px 1px #757575,inset 2px 2px 1.5px #b1b1b1,inset -2px -2px 2px #858585;"></div>
<div class="b ar" style="left:96px;top:998px;width:24px;height:18px;background:#979797;box-shadow:inset 1px 1px 0.5px #c2c2c2,inset -1px -1px 1px #727272,inset 2px 2px 1.5px #adadad,inset -2px -2px 2px #818181;"><span class="t" style="">◀</span></div>
<div class="b ar" style="left:120px;top:998px;width:24px;height:18px;background:#979797;box-shadow:inset 1px 1px 0.5px #c2c2c2,inset -1px -1px 1px #727272,inset 2px 2px 1.5px #adadad,inset -2px -2px 2px #818181;"><span class="t" style="">▶</span></div>
<div class="b " style="left:144px;top:944px;width:48px;height:24px;background:#979797;box-shadow:inset 1px 1px 0.5px #c2c2c2,inset -1px -1px 1px #727272,inset 2px 2px 1.5px #adadad,inset -2px -2px 2px #818181;"><span class="t" style="transform:scaleX(0.893);">204</span></div>
<div class="b " style="left:144px;top:968px;width:48px;height:24px;background:#979797;box-shadow:inset 1px 1px 0.5px #c2c2c2,inset -1px -1px 1px #727272,inset 2px 2px 1.5px #adadad,inset -2px -2px 2px #818181;"><span class="t" style="transform:scaleX(0.893);">204</span></div>
<div class="b " style="left:144px;top:992px;width:48px;height:24px;background:#979797;box-shadow:inset 1px 1px 0.5px #c2c2c2,inset -1px -1px 1px #727272,inset 2px 2px 1.5px #adadad,inset -2px -2px 2px #818181;"><span class="t" style="transform:scaleX(0.893);">204</span></div>
<div class="b mbox" style="left:192px;top:944px;width:96px;height:72px;background:#cccccc;box-shadow:inset 1px 1px 0.5px #e1e1e1,inset -1px -1px 1px #9b9b9b,inset 2px 2px 1.5px #d7d7d7,inset -2px -2px 2px #afafaf;"><span class="t" style="transform:scaleX(0.918);">M1_main</span></div>
<div class="b ar2" style="left:254px;top:998px;width:17px;height:18px;background:#979797;box-shadow:inset 1px 1px 0.5px #c2c2c2,inset -1px -1px 1px #727272,inset 2px 2px 1.5px #adadad,inset -2px -2px 2px #818181;"><span class="t" style="">◀</span></div>
<div class="b ar2" style="left:271px;top:998px;width:17px;height:18px;background:#979797;box-shadow:inset 1px 1px 0.5px #c2c2c2,inset -1px -1px 1px #727272,inset 2px 2px 1.5px #adadad,inset -2px -2px 2px #818181;"><span class="t" style="">▶</span></div>
<div class="b " style="left:0px;top:1016px;width:72px;height:24px;background:#cccccc;box-shadow:inset 1px 1px 0.5px #e1e1e1,inset -1px -1px 1px #9b9b9b,inset 2px 2px 1.5px #d7d7d7,inset -2px -2px 2px #afafaf;text-align:left;"><span class="t" style="transform:scaleX(0.88);transform-origin:0 50%;margin-left:8px">map</span></div>
<div class="b " style="left:72px;top:1016px;width:192px;height:24px;background:#a3a3ff;box-shadow:inset 1px 1px 0.5px #c9c9ff,inset -1px -1px 1px #7b7bc1,inset 2px 2px 1.5px #b7b7ff,inset -2px -2px 2px #8c8cdb;text-align:left;"><span class="t" style="transform:scaleX(0.918);transform-origin:0 50%;margin-left:8px">M1_main</span></div>
<div class="b " style="left:264px;top:1016px;width:96px;height:24px;background:#a1fafa;box-shadow:inset 1px 1px 0.5px #c8fcfc,inset -1px -1px 1px #7abebe,inset 2px 2px 1.5px #b5fbfb,inset -2px -2px 2px #8ad7d7;"><span class="t" style="transform:scaleX(0.908);">view</span></div>
<div class="b " style="left:0px;top:1040px;width:72px;height:24px;background:#cccccc;box-shadow:inset 1px 1px 0.5px #e1e1e1,inset -1px -1px 1px #9b9b9b,inset 2px 2px 1.5px #d7d7d7,inset -2px -2px 2px #afafaf;text-align:left;"><span class="t" style="transform:scaleX(1.026);transform-origin:0 50%;margin-left:8px">cutout</span></div>
<div class="b " style="left:72px;top:1040px;width:192px;height:24px;background:#a3a3ff;box-shadow:inset 1px 1px 0.5px #c9c9ff,inset -1px -1px 1px #7b7bc1,inset 2px 2px 1.5px #b7b7ff,inset -2px -2px 2px #8c8cdb;text-align:left;"><span class="t" style="transform:scaleX(0.92);transform-origin:0 50%;margin-left:8px">unnamed</span></div>
<div class="b " style="left:264px;top:1040px;width:96px;height:24px;background:#a1fafa;box-shadow:inset 1px 1px 0.5px #c8fcfc,inset -1px -1px 1px #7abebe,inset 2px 2px 1.5px #b5fbfb,inset -2px -2px 2px #8ad7d7;"><span class="t" style="transform:scaleX(0.908);">view</span></div>
<div class="b " style="left:0px;top:1064px;width:72px;height:24px;background:#cccccc;box-shadow:inset 1px 1px 0.5px #e1e1e1,inset -1px -1px 1px #9b9b9b,inset 2px 2px 1.5px #d7d7d7,inset -2px -2px 2px #afafaf;text-align:left;"><span class="t" style="transform:scaleX(0.935);transform-origin:0 50%;margin-left:8px">page</span></div>
<div class="b " style="left:72px;top:1064px;width:240px;height:24px;background:#a3a3ff;box-shadow:inset 1px 1px 0.5px #c9c9ff,inset -1px -1px 1px #7b7bc1,inset 2px 2px 1.5px #b7b7ff,inset -2px -2px 2px #8c8cdb;text-align:left;"><span class="t" style="transform:scaleX(1.023);transform-origin:0 50%;margin-left:8px">[no texture]</span></div>
<div class="b pg" style="left:312px;top:1064px;width:48px;height:24px;background:#a1fafa;box-shadow:inset 1px 1px 0.5px #c8fcfc,inset -1px -1px 1px #7abebe,inset 2px 2px 1.5px #b5fbfb,inset -2px -2px 2px #8ad7d7;"><span class="t" style="">▶</span></div>
<div class="b " style="left:0px;top:1088px;width:24px;height:24px;background:#979797;box-shadow:inset 1px 1px 0.5px #c2c2c2,inset -1px -1px 1px #727272,inset 2px 2px 1.5px #adadad,inset -2px -2px 2px #818181;"><span class="t" style="font-weight:bold;-webkit-text-stroke:0;transform:scaleX(0.8);">–</span></div>
<div class="b " style="left:24px;top:1088px;width:96px;height:24px;background:#a3a3ff;box-shadow:inset 1px 1px 0.5px #c9c9ff,inset -1px -1px 1px #7b7bc1,inset 2px 2px 1.5px #b7b7ff,inset -2px -2px 2px #8c8cdb;text-align:left;"><span class="t" style="transform:scaleX(0.723);-webkit-text-stroke:0.6px #000;transform-origin:0 50%;margin-left:8px">SOLID</span></div>
<div class="b " style="left:120px;top:1088px;width:96px;height:24px;background:#a3a3ff;box-shadow:inset 1px 1px 0.5px #c9c9ff,inset -1px -1px 1px #7b7bc1,inset 2px 2px 1.5px #b7b7ff,inset -2px -2px 2px #8c8cdb;text-align:left;"><span class="t" style="transform:scaleX(0.808);-webkit-text-stroke:0.6px #000;transform-origin:0 50%;margin-left:8px">MATT</span></div>
<div class="b " style="left:216px;top:1088px;width:48px;height:24px;background:#cccccc;box-shadow:inset 1px 1px 0.5px #e1e1e1,inset -1px -1px 1px #9b9b9b,inset 2px 2px 1.5px #d7d7d7,inset -2px -2px 2px #afafaf;"><span class="t" style="transform:scaleX(0.935);">0</span></div>
<div class="b " style="left:264px;top:1088px;width:96px;height:24px;background:#ffffff;box-shadow:inset 1px 1px 0.5px #ffffff,inset -1px -1px 1px #c1c1c1,inset 2px 2px 1.5px #ffffff,inset -2px -2px 2px #dbdbdb;text-align:left;"><span class="t" style="transform:scaleX(0.757);-webkit-text-stroke:0.6px #000;transform-origin:0 50%;margin-left:8px">NONE</span></div>
<div class="b " style="left:0px;top:1112px;width:216px;height:24px;background:#cccccc;box-shadow:inset 1px 1px 0.5px #e1e1e1,inset -1px -1px 1px #9b9b9b,inset 2px 2px 1.5px #d7d7d7,inset -2px -2px 2px #afafaf;"><span class="t" style="transform:scaleX(0.861);-webkit-text-stroke:0.6px #000;">PAZ672</span></div>
<div class="b " style="left:216px;top:1112px;width:72px;height:24px;background:#00f812;box-shadow:inset 1px 1px 0.5px #6bfa75,inset -1px -1px 1px #00bc0d,inset 2px 2px 1.5px #38f946,inset -2px -2px 2px #00d50f;"><span class="t" style="transform:scaleX(0.678);-webkit-text-stroke:0.6px #000;">LOAD</span></div>
<div class="b " style="left:288px;top:1112px;width:72px;height:24px;background:#00f812;box-shadow:inset 1px 1px 0.5px #6bfa75,inset -1px -1px 1px #00bc0d,inset 2px 2px 1.5px #38f946,inset -2px -2px 2px #00d50f;"><span class="t" style="transform:scaleX(0.727);-webkit-text-stroke:0.6px #000;">SAVE</span></div>
<div class="b " style="left:0px;top:1136px;width:72px;height:24px;background:#cccccc;box-shadow:inset 1px 1px 0.5px #e1e1e1,inset -1px -1px 1px #9b9b9b,inset 2px 2px 1.5px #d7d7d7,inset -2px -2px 2px #afafaf;"><span class="t" style="transform:scaleX(1.001);">skin</span></div>
<div class="b " style="left:72px;top:1136px;width:216px;height:24px;background:#cccccc;box-shadow:inset 1px 1px 0.5px #e1e1e1,inset -1px -1px 1px #9b9b9b,inset 2px 2px 1.5px #d7d7d7,inset -2px -2px 2px #afafaf;"></div>
<div class="b " style="left:288px;top:1136px;width:72px;height:24px;background:#ffffa0;box-shadow:inset 1px 1px 0.5px #ffffc7,inset -1px -1px 1px #c1c179,inset 2px 2px 1.5px #ffffb4,inset -2px -2px 2px #dbdb89;"><span class="t" style="transform:scaleX(0.726);-webkit-text-stroke:0.6px #000;">OBJ</span></div>
<div class="b " style="left:1728px;top:968px;width:96px;height:24px;background:#cccccc;box-shadow:inset 1px 1px 0.5px #e1e1e1,inset -1px -1px 1px #9b9b9b,inset 2px 2px 1.5px #d7d7d7,inset -2px -2px 2px #afafaf;"><span class="t" style="transform:scaleX(0.978);">invert</span></div>
<div class="b " style="left:1824px;top:968px;width:96px;height:24px;background:#cccccc;box-shadow:inset 1px 1px 0.5px #e1e1e1,inset -1px -1px 1px #9b9b9b,inset 2px 2px 1.5px #d7d7d7,inset -2px -2px 2px #afafaf;"><span class="t" style="transform:scaleX(0.915);">shadow</span></div>
<div class="b " style="left:1728px;top:992px;width:96px;height:24px;background:#a1faa1;box-shadow:inset 1px 1px 0.5px #c8fcc8,inset -1px -1px 1px #7abe7a,inset 2px 2px 1.5px #b5fbb5,inset -2px -2px 2px #8ad78a;"><span class="t" style="transform:scaleX(0.963);">load scm</span></div>
<div class="b " style="left:1824px;top:992px;width:96px;height:24px;background:#a1faa1;box-shadow:inset 1px 1px 0.5px #c8fcc8,inset -1px -1px 1px #7abe7a,inset 2px 2px 1.5px #b5fbb5,inset -2px -2px 2px #8ad78a;"><span class="t" style="transform:scaleX(0.962);">save scm</span></div>
<div class="b " style="left:1536px;top:1016px;width:96px;height:24px;background:#a3a3ff;box-shadow:inset 1px 1px 0.5px #c9c9ff,inset -1px -1px 1px #7b7bc1,inset 2px 2px 1.5px #b7b7ff,inset -2px -2px 2px #8c8cdb;text-align:left;"><span class="t" style="transform:scaleX(0.978);transform-origin:0 50%;margin-left:8px">layers</span></div>
<div class="b " style="left:1632px;top:1016px;width:96px;height:24px;background:#8c8ce4;box-shadow:inset 1px 1px 1px #6a6aad,inset -1px -1px 0.5px #b5b5ed,inset 2px 2px 2px #7979c6,inset -2px -2px 1.5px #a0a0e8;text-align:left;"><span class="t" style="transform:scaleX(0.937);transform-origin:0 50%;margin-left:8px">gouraud</span></div>
<div class="b " style="left:1728px;top:1016px;width:24px;height:24px;background:#00dc14;box-shadow:inset 1px 1px 1px #00a70f,inset -1px -1px 0.5px #5be868,inset 2px 2px 2px #00bf11,inset -2px -2px 1.5px #2de23e;"><span class="t" style="transform:scaleX(0.75);-webkit-text-stroke:0.6px #000;">P</span></div>
<div class="b " style="left:1752px;top:1016px;width:24px;height:24px;background:#00f812;box-shadow:inset 1px 1px 0.5px #6bfa75,inset -1px -1px 1px #00bc0d,inset 2px 2px 1.5px #38f946,inset -2px -2px 2px #00d50f;"><span class="t" style="transform:scaleX(1.129);">f</span></div>
<div class="b " style="left:1776px;top:1016px;width:24px;height:24px;background:#00f812;box-shadow:inset 1px 1px 0.5px #6bfa75,inset -1px -1px 1px #00bc0d,inset 2px 2px 1.5px #38f946,inset -2px -2px 2px #00d50f;"><span class="t" style="transform:scaleX(0.9);">b</span></div>
<div class="b " style="left:1800px;top:1016px;width:24px;height:24px;background:#00f812;box-shadow:inset 1px 1px 0.5px #6bfa75,inset -1px -1px 1px #00bc0d,inset 2px 2px 1.5px #38f946,inset -2px -2px 2px #00d50f;"><span class="t" style="transform:scaleX(0.807);">r</span></div>
<div class="b " style="left:1824px;top:1016px;width:24px;height:24px;background:#00f812;box-shadow:inset 1px 1px 0.5px #6bfa75,inset -1px -1px 1px #00bc0d,inset 2px 2px 1.5px #38f946,inset -2px -2px 2px #00d50f;"><span class="t" style="">l</span></div>
<div class="b " style="left:1848px;top:1016px;width:24px;height:24px;background:#00f812;box-shadow:inset 1px 1px 0.5px #6bfa75,inset -1px -1px 1px #00bc0d,inset 2px 2px 1.5px #38f946,inset -2px -2px 2px #00d50f;"><span class="t" style="transform:scaleX(1.027);">t</span></div>
<div class="b " style="left:1872px;top:1016px;width:24px;height:24px;background:#00f812;box-shadow:inset 1px 1px 0.5px #6bfa75,inset -1px -1px 1px #00bc0d,inset 2px 2px 1.5px #38f946,inset -2px -2px 2px #00d50f;"><span class="t" style="transform:scaleX(0.978);">u</span></div>
<div class="b " style="left:1896px;top:1016px;width:24px;height:24px;background:#ffffa0;box-shadow:inset 1px 1px 0.5px #ffffc7,inset -1px -1px 1px #c1c179,inset 2px 2px 1.5px #ffffb4,inset -2px -2px 2px #dbdb89;"><span class="t" style="">●</span></div>
<div class="b " style="left:1536px;top:1040px;width:96px;height:24px;background:#a3a3ff;box-shadow:inset 1px 1px 0.5px #c9c9ff,inset -1px -1px 1px #7b7bc1,inset 2px 2px 1.5px #b7b7ff,inset -2px -2px 2px #8c8cdb;text-align:left;"><span class="t" style="transform:scaleX(0.959);transform-origin:0 50%;margin-left:8px">wire</span></div>
<div class="b " style="left:1632px;top:1040px;width:96px;height:24px;background:#a3a3ff;box-shadow:inset 1px 1px 0.5px #c9c9ff,inset -1px -1px 1px #7b7bc1,inset 2px 2px 1.5px #b7b7ff,inset -2px -2px 2px #8c8cdb;text-align:left;"><span class="t" style="transform:scaleX(1.117);transform-origin:0 50%;margin-left:8px">flat</span></div>
<div class="b " style="left:1728px;top:1040px;width:96px;height:24px;background:#979797;box-shadow:inset 1px 1px 0.5px #c2c2c2,inset -1px -1px 1px #727272,inset 2px 2px 1.5px #adadad,inset -2px -2px 2px #818181;"><span class="t" style="font-weight:bold;-webkit-text-stroke:0;transform:scaleX(0.8);">–</span></div>
<div class="b " style="left:1824px;top:1040px;width:96px;height:24px;background:#979797;box-shadow:inset 1px 1px 0.5px #c2c2c2,inset -1px -1px 1px #727272,inset 2px 2px 1.5px #adadad,inset -2px -2px 2px #818181;"><span class="t" style="font-weight:bold;-webkit-text-stroke:0;transform:scaleX(0.8);">–</span></div>
<div class="b " style="left:1344px;top:1064px;width:144px;height:24px;background:#ffd1a0;box-shadow:inset 1px 1px 0.5px #ffe4c7,inset -1px -1px 1px #c19e79,inset 2px 2px 1.5px #ffdbb4,inset -2px -2px 2px #dbb389;text-align:left;"><span class="t" style="transform:scaleX(0.943);transform-origin:0 50%;margin-left:8px">show main</span></div>
<div class="b " style="left:1488px;top:1064px;width:48px;height:24px;background:#bebebe;box-shadow:inset 1px 1px 1px #909090,inset -1px -1px 0.5px #d5d5d5,inset 2px 2px 2px #a5a5a5,inset -2px -2px 1.5px #c9c9c9;"><span class="t" style="transform:scaleX(0.725);-webkit-text-stroke:0.6px #000;">YES</span></div>
<div class="b " style="left:1536px;top:1064px;width:96px;height:24px;background:#a3a3ff;box-shadow:inset 1px 1px 0.5px #c9c9ff,inset -1px -1px 1px #7b7bc1,inset 2px 2px 1.5px #b7b7ff,inset -2px -2px 2px #8c8cdb;text-align:left;"><span class="t" style="transform:scaleX(0.912);transform-origin:0 50%;margin-left:8px">mappings</span></div>
<div class="b " style="left:1632px;top:1064px;width:96px;height:24px;background:#a3a3ff;box-shadow:inset 1px 1px 0.5px #c9c9ff,inset -1px -1px 1px #7b7bc1,inset 2px 2px 1.5px #b7b7ff,inset -2px -2px 2px #8c8cdb;text-align:left;"><span class="t" style="transform:scaleX(0.936);transform-origin:0 50%;margin-left:8px">groups</span></div>
<div class="b " style="left:1728px;top:1064px;width:48px;height:24px;background:#a3a3ff;box-shadow:inset 1px 1px 0.5px #c9c9ff,inset -1px -1px 1px #7b7bc1,inset 2px 2px 1.5px #b7b7ff,inset -2px -2px 2px #8c8cdb;"><span class="t" style="transform:scaleX(0.889);">0.1m</span></div>
<div class="b " style="left:1776px;top:1064px;width:48px;height:24px;background:#8c8ce4;box-shadow:inset 1px 1px 1px #6a6aad,inset -1px -1px 0.5px #b5b5ed,inset 2px 2px 2px #7979c6,inset -2px -2px 1.5px #a0a0e8;"><span class="t" style="transform:scaleX(0.836);">1m</span></div>
<div class="b " style="left:1824px;top:1064px;width:48px;height:24px;background:#a3a3ff;box-shadow:inset 1px 1px 0.5px #c9c9ff,inset -1px -1px 1px #7b7bc1,inset 2px 2px 1.5px #b7b7ff,inset -2px -2px 2px #8c8cdb;"><span class="t" style="transform:scaleX(0.917);">10m</span></div>
<div class="b " style="left:1872px;top:1064px;width:48px;height:24px;background:#a3a3ff;box-shadow:inset 1px 1px 0.5px #c9c9ff,inset -1px -1px 1px #7b7bc1,inset 2px 2px 1.5px #b7b7ff,inset -2px -2px 2px #8c8cdb;"><span class="t" style="font-weight:bold;-webkit-text-stroke:0;transform:scaleX(0.8);">–</span></div>
<div class="b " style="left:1344px;top:1088px;width:144px;height:24px;background:#ffd1a0;box-shadow:inset 1px 1px 0.5px #ffe4c7,inset -1px -1px 1px #c19e79,inset 2px 2px 1.5px #ffdbb4,inset -2px -2px 2px #dbb389;text-align:left;"><span class="t" style="transform:scaleX(0.972);transform-origin:0 50%;margin-left:8px">show wheels</span></div>
<div class="b " style="left:1488px;top:1088px;width:48px;height:24px;background:#bebebe;box-shadow:inset 1px 1px 1px #909090,inset -1px -1px 0.5px #d5d5d5,inset 2px 2px 2px #a5a5a5,inset -2px -2px 1.5px #c9c9c9;"><span class="t" style="transform:scaleX(0.725);-webkit-text-stroke:0.6px #000;">YES</span></div>
<div class="b " style="left:1536px;top:1088px;width:96px;height:24px;background:#a3a3ff;box-shadow:inset 1px 1px 0.5px #c9c9ff,inset -1px -1px 1px #7b7bc1,inset 2px 2px 1.5px #b7b7ff,inset -2px -2px 2px #8c8cdb;text-align:left;"><span class="t" style="transform:scaleX(0.964);transform-origin:0 50%;margin-left:8px">n.c.level</span></div>
<div class="b " style="left:1632px;top:1088px;width:96px;height:24px;background:#a3a3ff;box-shadow:inset 1px 1px 0.5px #c9c9ff,inset -1px -1px 1px #7b7bc1,inset 2px 2px 1.5px #b7b7ff,inset -2px -2px 2px #8c8cdb;text-align:left;"><span class="t" style="transform:scaleX(0.979);transform-origin:0 50%;margin-left:8px">l.r.swap</span></div>
<div class="b " style="left:1728px;top:1088px;width:96px;height:24px;background:#a1fafa;box-shadow:inset 1px 1px 0.5px #c8fcfc,inset -1px -1px 1px #7abebe,inset 2px 2px 1.5px #b5fbfb,inset -2px -2px 2px #8ad7d7;"><span class="t" style="transform:scaleX(0.97);">origin</span></div>
<div class="b " style="left:1824px;top:1088px;width:96px;height:24px;background:#a1fafa;box-shadow:inset 1px 1px 0.5px #c8fcfc,inset -1px -1px 1px #7abebe,inset 2px 2px 1.5px #b5fbfb,inset -2px -2px 2px #8ad7d7;"><span class="t" style="transform:scaleX(0.981);">object</span></div>
<div class="b " style="left:1344px;top:1112px;width:144px;height:24px;background:#ffffa0;box-shadow:inset 1px 1px 0.5px #ffffc7,inset -1px -1px 1px #c1c179,inset 2px 2px 1.5px #ffffb4,inset -2px -2px 2px #dbdb89;text-align:left;"><span class="t" style="transform:scaleX(0.943);transform-origin:0 50%;margin-left:8px">show hidden</span></div>
<div class="b " style="left:1488px;top:1112px;width:48px;height:24px;background:#cccccc;box-shadow:inset 1px 1px 0.5px #e1e1e1,inset -1px -1px 1px #9b9b9b,inset 2px 2px 1.5px #d7d7d7,inset -2px -2px 2px #afafaf;"><span class="t" style="transform:scaleX(0.741);-webkit-text-stroke:0.6px #000;">NO</span></div>
<div class="b " style="left:1536px;top:1112px;width:144px;height:24px;background:#ffffa0;box-shadow:inset 1px 1px 0.5px #ffffc7,inset -1px -1px 1px #c1c179,inset 2px 2px 1.5px #ffffb4,inset -2px -2px 2px #dbdb89;text-align:left;"><span class="t" style="transform:scaleX(1.008);transform-origin:0 50%;margin-left:8px">test l.r.swap</span></div>
<div class="b " style="left:1680px;top:1112px;width:48px;height:24px;background:#cccccc;box-shadow:inset 1px 1px 0.5px #e1e1e1,inset -1px -1px 1px #9b9b9b,inset 2px 2px 1.5px #d7d7d7,inset -2px -2px 2px #afafaf;"><span class="t" style="transform:scaleX(0.741);-webkit-text-stroke:0.6px #000;">NO</span></div>
<div class="b " style="left:1728px;top:1112px;width:48px;height:24px;background:#fff910;box-shadow:inset 1px 1px 0.5px #fffb74,inset -1px -1px 1px #c1bd0c,inset 2px 2px 1.5px #fffa44,inset -2px -2px 2px #dbd60d;"><span class="t" style="transform:scaleX(0.905);">blob</span></div>
<div class="b " style="left:1776px;top:1112px;width:24px;height:24px;background:#fff910;box-shadow:inset 1px 1px 0.5px #fffb74,inset -1px -1px 1px #c1bd0c,inset 2px 2px 1.5px #fffa44,inset -2px -2px 2px #dbd60d;"><span class="t" style="font-weight:bold;-webkit-text-stroke:0;transform:scaleX(0.8);">–</span></div>
<div class="b " style="left:1800px;top:1112px;width:24px;height:24px;background:#fff910;box-shadow:inset 1px 1px 0.5px #fffb74,inset -1px -1px 1px #c1bd0c,inset 2px 2px 1.5px #fffa44,inset -2px -2px 2px #dbd60d;"><span class="t" style="font-weight:bold;-webkit-text-stroke:0;transform:scaleX(0.8);">+</span></div>
<div class="b " style="left:1824px;top:1112px;width:48px;height:24px;background:#fff910;box-shadow:inset 1px 1px 0.5px #fffb74,inset -1px -1px 1px #c1bd0c,inset 2px 2px 1.5px #fffa44,inset -2px -2px 2px #dbd60d;"><span class="t" style="transform:scaleX(1.015);">text</span></div>
<div class="b " style="left:1872px;top:1112px;width:24px;height:24px;background:#fff910;box-shadow:inset 1px 1px 0.5px #fffb74,inset -1px -1px 1px #c1bd0c,inset 2px 2px 1.5px #fffa44,inset -2px -2px 2px #dbd60d;"><span class="t" style="font-weight:bold;-webkit-text-stroke:0;transform:scaleX(0.8);">–</span></div>
<div class="b " style="left:1896px;top:1112px;width:24px;height:24px;background:#fff910;box-shadow:inset 1px 1px 0.5px #fffb74,inset -1px -1px 1px #c1bd0c,inset 2px 2px 1.5px #fffa44,inset -2px -2px 2px #dbd60d;"><span class="t" style="font-weight:bold;-webkit-text-stroke:0;transform:scaleX(0.8);">+</span></div>
<div class="b " style="left:1344px;top:1136px;width:48px;height:24px;background:#a3a3ff;box-shadow:inset 1px 1px 0.5px #c9c9ff,inset -1px -1px 1px #7b7bc1,inset 2px 2px 1.5px #b7b7ff,inset -2px -2px 2px #8c8cdb;"><span class="t" style="transform:scaleX(0.937);">nrm</span></div>
<div class="b " style="left:1392px;top:1136px;width:48px;height:24px;background:#bebebe;box-shadow:inset 1px 1px 1px #909090,inset -1px -1px 0.5px #d5d5d5,inset 2px 2px 2px #a5a5a5,inset -2px -2px 1.5px #c9c9c9;"><span class="t" style="transform:scaleX(1.112);">off</span></div>
<div class="b " style="left:1440px;top:1136px;width:48px;height:24px;background:#cccccc;box-shadow:inset 1px 1px 0.5px #e1e1e1,inset -1px -1px 1px #9b9b9b,inset 2px 2px 1.5px #d7d7d7,inset -2px -2px 2px #afafaf;"><span class="t" style="transform:scaleX(0.938);">sml</span></div>
<div class="b " style="left:1488px;top:1136px;width:48px;height:24px;background:#cccccc;box-shadow:inset 1px 1px 0.5px #e1e1e1,inset -1px -1px 1px #9b9b9b,inset 2px 2px 1.5px #d7d7d7,inset -2px -2px 2px #afafaf;"><span class="t" style="transform:scaleX(0.993);">big</span></div>
<div class="b " style="left:1536px;top:1136px;width:144px;height:24px;background:#ffd1a0;box-shadow:inset 1px 1px 0.5px #ffe4c7,inset -1px -1px 1px #c19e79,inset 2px 2px 1.5px #ffdbb4,inset -2px -2px 2px #dbb389;text-align:left;"><span class="t" style="transform:scaleX(0.935);transform-origin:0 50%;margin-left:8px">wire overlay</span></div>
<div class="b " style="left:1680px;top:1136px;width:48px;height:24px;background:#bebebe;box-shadow:inset 1px 1px 1px #909090,inset -1px -1px 0.5px #d5d5d5,inset 2px 2px 2px #a5a5a5,inset -2px -2px 1.5px #c9c9c9;"><span class="t" style="transform:scaleX(0.725);-webkit-text-stroke:0.6px #000;">YES</span></div>
<div class="b " style="left:1728px;top:1136px;width:168px;height:24px;background:#a1faa1;box-shadow:inset 1px 1px 0.5px #c8fcc8,inset -1px -1px 1px #7abe7a,inset 2px 2px 1.5px #b5fbb5,inset -2px -2px 2px #8ad78a;"><span class="t" style="transform:scaleX(0.983);">reload textures</span></div>
<div class="b " style="left:1896px;top:1136px;width:24px;height:24px;background:#cccccc;box-shadow:inset 1px 1px 0.5px #e1e1e1,inset -1px -1px 1px #9b9b9b,inset 2px 2px 1.5px #d7d7d7,inset -2px -2px 2px #afafaf;"><span class="t" style="font-weight:bold;-webkit-text-stroke:0;transform:scaleX(0.8);">–</span></div>
<div style="position:absolute;left:73px;top:945px;width:5px;height:15px;background:#ffb0a0;box-shadow:inset 1px 0 0 rgba(255,255,255,.35),inset -1px 0 0 rgba(0,0,0,.18)"></div>
<div style="position:absolute;left:73px;top:963px;width:5px;height:15px;background:#c8ffc8;box-shadow:inset 1px 0 0 rgba(255,255,255,.35),inset -1px 0 0 rgba(0,0,0,.18)"></div>
<div style="position:absolute;left:73px;top:981px;width:5px;height:15px;background:#c6c6ff;box-shadow:inset 1px 0 0 rgba(255,255,255,.35),inset -1px 0 0 rgba(0,0,0,.18)"></div>
<div style="position:absolute;left:73px;top:999px;width:5px;height:15px;background:#b4b4b4;box-shadow:inset 1px 0 0 rgba(255,255,255,.35),inset -1px 0 0 rgba(0,0,0,.18)"></div>
<div id="taskbar">
<svg width="1920" height="40" viewBox="0 1160 1920 40" style="position:absolute;left:0;top:0">
<rect x="0" y="1160" width="1920" height="40" fill="#101010"/>
<!-- start -->
<path d="M15.6 1173.9l6.7-.9v6.4h-6.7zM23.1 1172.9l8.9-1.2v7.7h-8.9zM15.6 1180.2h6.7v6.4l-6.7-.9zM23.1 1180.2h8.9v7.7l-8.9-1.2z" fill="#fff"/>
<!-- search -->
<rect x="48" y="1160.5" width="343.5" height="39.5" fill="#f2f2f2"/>
<rect x="48" y="1160" width="343.5" height="1" fill="#8a8a8a"/>
<circle cx="70" cy="1177.5" r="4.6" fill="none" stroke="#222" stroke-width="1.3"/><path d="M66.7 1181l-5.7 6" stroke="#222" stroke-width="1.4" fill="none"/>
<g style="filter:blur(0.7px)" opacity="0.9"><polygon points="318,1200 326,1188 340,1181 352,1176 364,1174 376,1175 391,1172 391,1200" fill="#dfe0ef"/>
<polygon points="326,1188 340,1181 338,1194" fill="#f4f4fb"/><polygon points="340,1181 352,1176 356,1190 338,1194" fill="#cfd2e8"/>
<polygon points="352,1176 364,1174 372,1186 356,1190" fill="#eeeff8"/><polygon points="364,1174 376,1175 384,1184 372,1186" fill="#c9cce6"/>
<polygon points="376,1175 391,1172 391,1186 384,1184" fill="#e7e3f2"/><polygon points="338,1194 356,1190 360,1200 330,1200" fill="#e9eaf6"/>
<polygon points="356,1190 372,1186 380,1200 360,1200" fill="#d4d6ec"/><polygon points="372,1186 384,1184 391,1192 391,1200 380,1200" fill="#f0effa"/></g>
<!-- task view -->
<g fill="none" stroke="#fff" stroke-width="1.5"><rect x="410.5" y="1175.5" width="8.5" height="8"/><path d="M408 1173h12.5M408 1186.500h12.5M423 1172.500v3M423 1178.500v3.500M423 1184v3"/></g>
<!-- discord -->
<circle cx="466.900" cy="1179.500" r="11.8" fill="#5b6df0"/>
<path d="M461 1176.500c2-1.500 9.500-1.500 11.500 0c1.500 2.500 2 5 2 7c-1.500 1.200-3 1.700-3.500 1.700l-.8-1.400h-7l-.8 1.400c-.5 0-2-.5-3.500-1.700c0-2 .5-4.500 2.100-7z" fill="#fff"/>
<circle cx="464.500" cy="1180.500" r="1.400" fill="#5b6df0"/><circle cx="469.300" cy="1180.500" r="1.400" fill="#5b6df0"/>
<circle cx="472.800" cy="1186.300" r="7" fill="#e8474c"/><circle cx="472.800" cy="1186.300" r="3" fill="#fff"/>
<!-- navy -->
<rect x="504" y="1168.500" width="23.500" height="22.500" rx="3.500" fill="#130a5c"/>
<circle cx="515.800" cy="1179.800" r="5.800" fill="none" stroke="#fff" stroke-width="2"/><circle cx="515.800" cy="1179.800" r="1.700" fill="#fff"/><circle cx="521" cy="1174.800" r="1.500" fill="#ff5aa8"/>
<!-- w -->
<circle cx="565" cy="1179.800" r="12.200" fill="#fff"/>
<path d="M559.300 1176.200v5.300a2.800 2.800 0 0 0 5.600 0v-5.300M564.900 1181.500a2.800 2.800 0 0 0 5.600 0v-5.300" fill="none" stroke="#2a9ed0" stroke-width="1.500"/>
<!-- tablet -->
<polygon points="601.700,1178.700 617.300,1171.700 624.400,1176.400 609.500,1185.800" fill="#4c4c4c"/><polygon points="601.700,1178.700 609.500,1185.800 609.500,1187 601.700,1180" fill="#2e2e2e"/>
<!-- ps -->
<rect x="653.200" y="1170" width="19.600" height="18.600" fill="#0c1c30" stroke="#29c5f6" stroke-width="1.800"/>
<text x="663" y="1184" font-family="Liberation Sans, sans-serif" font-size="11.500" font-weight="bold" fill="#29c5f6" text-anchor="middle">Ps</text>
<!-- calc -->
<rect x="703.300" y="1168" width="17.700" height="23.700" rx="1.500" fill="#8e9aa8"/><rect x="705" y="1169.800" width="14.300" height="4.200" fill="#5cc8f0"/>
<g fill="#e9eef3"><rect x="705" y="1176" width="3.800" height="3.800"/><rect x="710.200" y="1176" width="3.800" height="3.800"/><rect x="715.400" y="1176" width="3.800" height="3.800"/><rect x="705" y="1181.200" width="3.800" height="3.800"/><rect x="710.200" y="1181.200" width="3.800" height="3.800"/><rect x="705" y="1186.400" width="3.800" height="3.800"/><rect x="710.200" y="1186.400" width="3.800" height="3.800"/></g><rect x="715.400" y="1181.200" width="3.800" height="9" fill="#1f5fa8"/>
<!-- folder -->
<path d="M750 1172.500a1.200 1.200 0 0 1 1.200-1.200h6.300l1.800 2h11.700a1.200 1.200 0 0 1 1.200 1.200v13.500h-22.200z" fill="#f0b93a"/><rect x="750" y="1175" width="22.200" height="13.500" fill="#f9d262"/>
<path d="M754.500 1189v-6.500h13.200v6.500h-3.400v-3.300h-6.400v3.300z" fill="#3a9be0"/>
<!-- brave -->
<path d="M805 1168.500h10.400l2 2.300l2.600-.3l1.200 3.500l-.8 3l.4 2.500l-2.500 7.300l-8.100 5.400l-8.100-5.400l-2.500-7.300l.4-2.500l-.8-3l1.200-3.500l2.600.3z" fill="#f4511e"/>
<path d="M810.200 1172.500l3.300-.5l3.300 2.800l-1 3.200l.7 2l-2.600 3.300l-1.700 1l-2 2.200l-2-2.200l-1.700-1l-2.600-3.300l.7-2l-1-3.200l3.300-2.800z" fill="#fff"/>
<path d="M806.300 1177.500l2.300.6l-.9 1.200zM814.100 1177.500l-2.300.6l.9 1.200zM810.200 1180.500l1.300 2.500l-1.300 1l-1.300-1z" fill="#f4511e"/>
<!-- chrome -->
<circle cx="858.900" cy="1179.800" r="12.200" fill="#db4437"/>
<path d="M858.900 1179.800L848.300 1173.700A12.200 12.200 0 0 0 858.900 1192Z" fill="#0f9d58"/>
<path d="M858.900 1179.800L858.900 1192A12.200 12.200 0 0 0 869.500 1173.700Z" fill="#ffcd40"/>
<path d="M858.900 1179.800L869.500 1173.700A12.200 12.200 0 0 0 848.300 1173.700Z" fill="#db4437"/>
<path d="M858.900 1179.800L852.800 1190.400A12.200 12.200 0 0 0 858.900 1192Z" fill="#0f9d58"/>
<circle cx="858.900" cy="1179.800" r="5.600" fill="#fff"/><circle cx="858.900" cy="1179.800" r="4.400" fill="#4285f4"/>
<!-- notepad -->
<polygon points="903.500,1169.500 916.500,1170.500 918.600,1188 905,1190.500 896,1186" fill="#dfe9ea"/><polygon points="903,1170.500 915.500,1171.500 911.500,1187 896.500,1185.500" fill="#8fcfdc"/><polygon points="903,1170.500 909,1171 903.500,1186 896.500,1185.500" fill="#5db4c6"/>
<!-- lfs active -->
<rect x="933" y="1160" width="48" height="40" fill="#333"/>
<rect x="945" y="1167.800" width="24" height="24" rx="4" fill="#050505" stroke="#3c3c3c" stroke-width="0.800"/>
<path d="M945.500 1168.300h23v6c-8 1-15 3-23 7z" fill="#3a3a3a" opacity="0.8"/><path d="M953.200 1170.300h4.600l-5 10.600h4.800l-1.300 2.800h-9.300z" fill="#f2cf3a"/><path d="M960.400 1174h7.400l-1.400 3h-4.200l-.9 2h4.200l-3.300 8h-8l1.400-3h4.600l1-2.400h-4.300z" fill="#49a9e8"/>
<!-- paint -->
<path d="M1003.500 1172.500c6-1.500 11 1 11.500 6c.5 5-3 9-8 9.500c-2 .2-2.500-1.500-2-3c.5-1.600-.5-2.500-2-2.500c-2.500 0-7 1-7.500-3c-.4-3.500 3.500-6 8-7z" fill="#cfe3f2"/>
<circle cx="1000.500" cy="1178.500" r="1.700" fill="#e0453a"/><circle cx="1004.500" cy="1175.500" r="1.700" fill="#58b84a"/><circle cx="1009.500" cy="1175.500" r="1.700" fill="#f0c030"/><circle cx="1008" cy="1183" r="1.900" fill="#1a2a4a"/>
<path d="M1017.500 1168l-2.500 5l-6.500 16.500l1.500.8l7-16z" fill="#c9853a"/><path d="M1015 1173l2.500-5l1.500 1.500l-1.500 5z" fill="#e8c9a0"/>
<!-- running indicators -->
<g fill="#8fa3b5"><rect x="447" y="1198" width="40" height="2"/><rect x="692" y="1198" width="40" height="2"/><rect x="741" y="1198" width="31" height="2"/><rect x="773" y="1198" width="8" height="2" fill="#6f8396"/><rect x="790" y="1198" width="40" height="2"/><rect x="839" y="1198" width="40" height="2"/><rect x="986" y="1198" width="40" height="2"/></g><rect x="933" y="1198" width="48" height="2" fill="#a9bccd"/>
<!-- tray -->
<path d="M1556 1187.500c-3 0-4.500-2-4.500-4.200c0-2.300 1.800-4 4-4c.5-3.500 3.300-6 6.800-6c3.200 0 5.700 2 6.500 4.800c3.200 0 5.700 2 5.700 4.900c0 2.700-2.200 4.500-5 4.500z" fill="#bcd6f5"/><path d="M1556 1187.500c-3 0-4.500-2-4.500-4.200c2 2 5 2.500 9 2.500h13.500c-.8 1-2.500 1.700-4.500 1.700z" fill="#8db4e8"/>
<path d="M1680.500 1182.500l5.500-5.500l5.500 5.500" fill="none" stroke="#fff" stroke-width="1.300"/>
<path d="M1702.500 1177.500h2.500l3.500-3.500v12l-3.500-3.500h-2.500z" fill="none" stroke="#fff" stroke-width="1.100"/><path d="M1710.800 1177.500a3.500 3.500 0 0 1 0 5M1713.200 1175.300a6.500 6.500 0 0 1 0 9.400M1715.600 1173.300a9.500 9.500 0 0 1 0 13.400" fill="none" stroke="#fff" stroke-width="1.100"/>
<rect x="1726.500" y="1174" width="22" height="11.500" rx="1" fill="none" stroke="#fff" stroke-width="1.200"/><path d="M1729 1177h17.500M1729 1179.500h17.500" stroke="#fff" stroke-width="1.200" stroke-dasharray="1.300 1.200" fill="none"/><path d="M1731.500 1182.500h12" stroke="#fff" stroke-width="1.200" fill="none"/>
<path d="M1879.500 1172.500h16v10.500h-9l-3.500 3.500v-3.500h-3.500z" fill="#fff"/><path d="M1882 1175.500h11M1882 1178h11M1882 1180.500h7" stroke="#101010" stroke-width="1" fill="none"/>
<circle cx="1894" cy="1187.700" r="8" fill="#2b2b2b" stroke="#101010" stroke-width="1"/>
<rect x="1915.500" y="1162" width="1" height="38" fill="#4a4a4a"/>
</svg>
<span class="tb" style="left:89px;top:11px;font-size:15px;color:#3a3a3a;transform:scaleX(0.97)">Type here to search</span>
<span class="tb" style="left:1584px;top:11px;font-size:14px;color:#fff;transform:scaleX(0.98)">43°F&nbsp; Cloudy</span>
<span class="tb" style="left:1760px;top:12px;font-size:12px;color:#fff;transform:scaleX(0.9)">ENG</span>
<span class="tb" style="left:1815px;top:2px;font-size:12px;color:#fff;transform:scaleX(0.92)">16:57</span>
<span class="tb" style="left:1797px;top:20px;font-size:12px;color:#fff;transform:scaleX(0.9)">10.01.2023 г.</span>
<span class="tb" style="left:1890.500px;top:20px;font-size:11px;font-weight:bold;color:#fff">4</span>
</div>

</div>
</body></html>
